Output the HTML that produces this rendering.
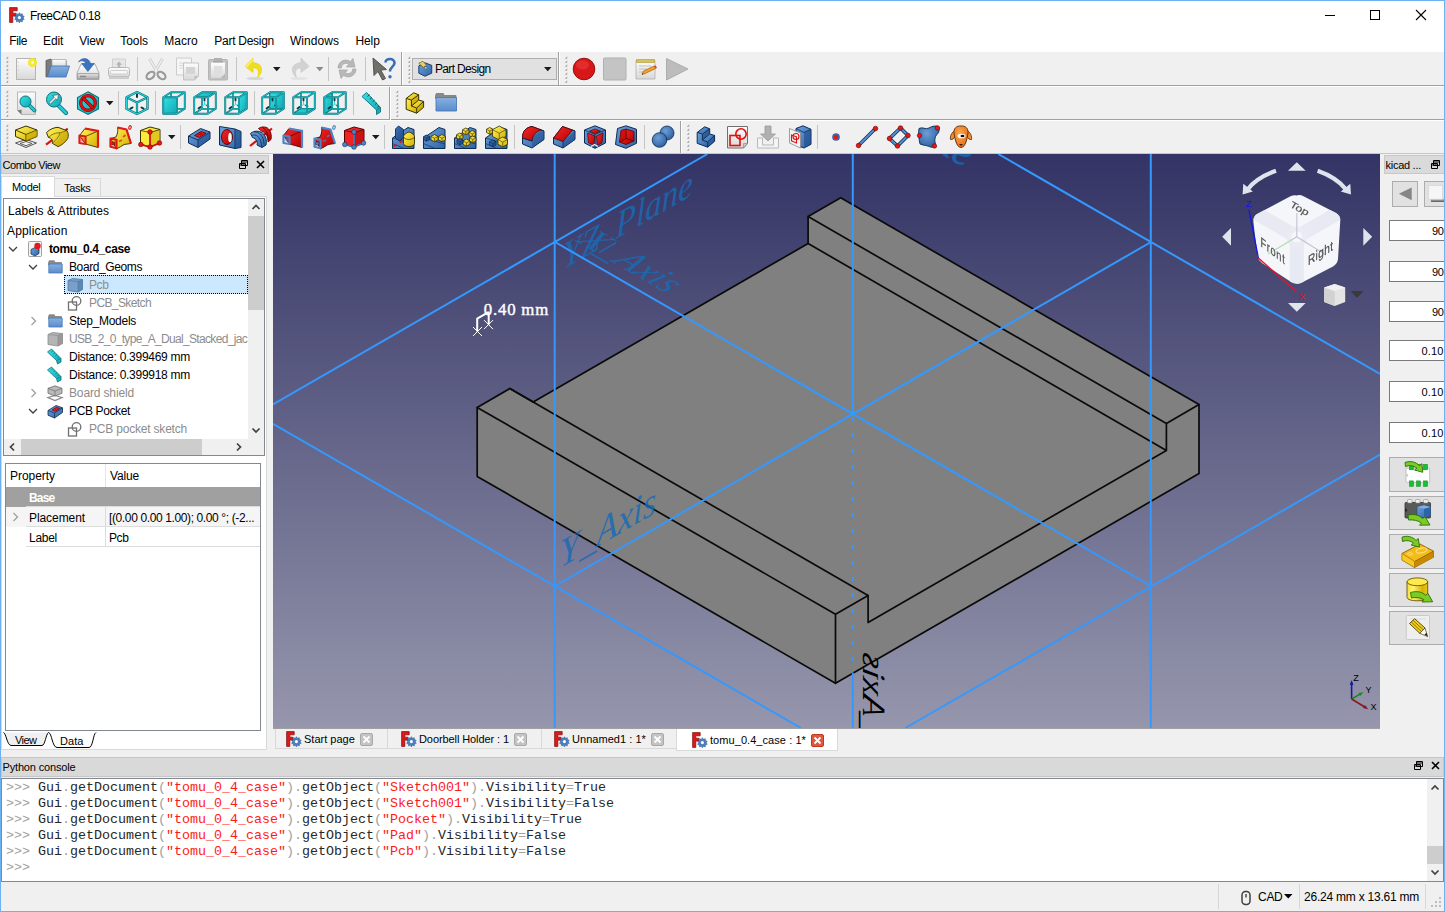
<!DOCTYPE html>
<html lang="en"><head><meta charset="utf-8"><title>FreeCAD 0.18</title>
<style>
html,body{margin:0;padding:0}
body{width:1445px;height:912px;overflow:hidden;background:#f0f0f0;font-family:"Liberation Sans",sans-serif;font-size:12px;position:relative}
.a{position:absolute;display:block}
.t{position:absolute;white-space:pre;display:block}
</style></head>
<body>
<svg class="a" width="0" height="0" style="left:0;top:0"><defs>
<linearGradient id="gY" x1="0" y1="0" x2="1" y2="1"><stop offset="0" stop-color="#fff35a"/><stop offset="1" stop-color="#d4b000"/></linearGradient>
<linearGradient id="gYd" x1="0" y1="0" x2="1" y2="1"><stop offset="0" stop-color="#e8cc18"/><stop offset="1" stop-color="#b89400"/></linearGradient>
<linearGradient id="gB" x1="0" y1="0" x2="1" y2="1"><stop offset="0" stop-color="#6da2dc"/><stop offset="1" stop-color="#2f63a6"/></linearGradient>
<linearGradient id="gBd" x1="0" y1="0" x2="1" y2="1"><stop offset="0" stop-color="#3d74b8"/><stop offset="1" stop-color="#1d4786"/></linearGradient>
<linearGradient id="gR" x1="0" y1="0" x2="1" y2="1"><stop offset="0" stop-color="#f42a2a"/><stop offset="1" stop-color="#b40000"/></linearGradient>
<linearGradient id="gT" x1="0" y1="0" x2="1" y2="1"><stop offset="0" stop-color="#36e0e6"/><stop offset="1" stop-color="#10a8b2"/></linearGradient>
<linearGradient id="gG" x1="0" y1="0" x2="0" y2="1"><stop offset="0" stop-color="#fdfdfd"/><stop offset="1" stop-color="#d8d8d8"/></linearGradient>
<linearGradient id="gG2" x1="0" y1="0" x2="0" y2="1"><stop offset="0" stop-color="#e4e4e4"/><stop offset="1" stop-color="#a8a8a8"/></linearGradient>
<linearGradient id="gFo" x1="0" y1="0" x2="0" y2="1"><stop offset="0" stop-color="#86b0e0"/><stop offset="1" stop-color="#5a8ccc"/></linearGradient>
<linearGradient id="gCy" x1="0" y1="0" x2="1" y2="0"><stop offset="0" stop-color="#f8e030"/><stop offset=".3" stop-color="#fff27a"/><stop offset=".75" stop-color="#d8b000"/><stop offset="1" stop-color="#e8c818"/></linearGradient>
<radialGradient id="gGlow"><stop offset="0" stop-color="#fff"/><stop offset=".35" stop-color="#f6ee3a"/><stop offset=".8" stop-color="#efe420" stop-opacity=".9"/><stop offset="1" stop-color="#efe420" stop-opacity="0"/></radialGradient>
<radialGradient id="gSph" cx=".4" cy=".35" r=".7"><stop offset="0" stop-color="#6c9fd8"/><stop offset="1" stop-color="#2c5e9e"/></radialGradient>
<radialGradient id="gOr" cx=".4" cy=".35" r=".7"><stop offset="0" stop-color="#ffa64d"/><stop offset="1" stop-color="#e0701a"/></radialGradient>
</defs></svg>
<div class="a" style="left:0px;top:0px;width:1445px;height:912px;border:1px solid #6fb1f0;box-sizing:border-box;z-index:50;pointer-events:none;"></div>
<div class="a" style="left:1px;top:1px;width:1443px;height:51px;background:#fff;"></div>
<svg class="a" style="left:9px;top:7px" width="16" height="16" viewBox="0 0 16 16"><path d="M.6.6h7.600v3.200H3.800v2.400h3v2.800h-3V15.400H.6z" fill="#e01818" stroke="#7a0c0c" stroke-width=".7"/><g transform="translate(10.4 10.6) scale(.92)"><path d="M0-5.4l1.2 1.7 2-.6.1 2.1 2 .7-1.2 1.7 1.2 1.7-2 .7-.1 2.1-2-.6L0 5.8l-1.2-1.7-2 .6-.1-2.1-2-.7 1.2-1.7-1.2-1.7 2-.7.1-2.1 2 .6z" fill="#4a7ebc" stroke="#2c5a94" stroke-width=".5"/><circle r="1.7" fill="#fff"/></g></svg>
<span class="t" style="left:30px;top:8.04px;font-size:12px;line-height:16px;color:#000;letter-spacing:-0.557px;">FreeCAD 0.18</span>
<svg class="a" style="left:1320px;top:5px;" width="112" height="20" viewBox="0 0 112 20"><path d="M5 10.5h10" stroke="#000" stroke-width="1" fill="none"/><rect x="50.5" y="5.5" width="9" height="9" fill="none" stroke="#000" stroke-width="1"/><path d="M96 5l10 10M106 5l-10 10" stroke="#000" stroke-width="1.1" fill="none"/></svg>
<span class="t" style="left:9.2px;top:32.64px;font-size:12px;line-height:16px;color:#000;letter-spacing:-0.336px;">File</span>
<span class="t" style="left:43px;top:32.64px;font-size:12px;line-height:16px;color:#000;letter-spacing:-0.093px;">Edit</span>
<span class="t" style="left:79.2px;top:32.64px;font-size:12px;line-height:16px;color:#000;letter-spacing:-0.199px;">View</span>
<span class="t" style="left:120.3px;top:32.64px;font-size:12px;line-height:16px;color:#000;letter-spacing:-0.063px;">Tools</span>
<span class="t" style="left:164.2px;top:32.64px;font-size:12px;line-height:16px;color:#000;letter-spacing:0.051px;">Macro</span>
<span class="t" style="left:214.3px;top:32.64px;font-size:12px;line-height:16px;color:#000;letter-spacing:-0.272px;">Part Design</span>
<span class="t" style="left:290px;top:32.64px;font-size:12px;line-height:16px;color:#000;letter-spacing:0.045px;">Windows</span>
<span class="t" style="left:355.5px;top:32.64px;font-size:12px;line-height:16px;color:#000;letter-spacing:-0.122px;">Help</span>
<div class="a" style="left:1px;top:52px;width:1443px;height:102px;background:#f0f0f0;"></div>
<div class="a" style="left:1px;top:85px;width:1443px;height:1px;background:#a0a0a0;"></div>
<div class="a" style="left:1px;top:86px;width:1443px;height:1px;background:#fff;"></div>
<div class="a" style="left:1px;top:119px;width:1443px;height:1px;background:#a0a0a0;"></div>
<div class="a" style="left:1px;top:120px;width:1443px;height:1px;background:#fff;"></div>
<svg class="a" style="left:5px;top:56px;" width="4" height="29" viewBox="0 0 4 29"><path d="M3.200 0.3v2.400h-2.400z" fill="#a2a2a2"/><path d="M3.200 4.3v2.400h-2.400z" fill="#a2a2a2"/><path d="M3.200 8.3v2.400h-2.400z" fill="#a2a2a2"/><path d="M3.200 12.3v2.400h-2.400z" fill="#a2a2a2"/><path d="M3.200 16.3v2.400h-2.400z" fill="#a2a2a2"/><path d="M3.200 20.3v2.400h-2.400z" fill="#a2a2a2"/><path d="M3.200 24.3v2.400h-2.400z" fill="#a2a2a2"/></svg>
<svg class="a" style="left:5px;top:90px;" width="4" height="29" viewBox="0 0 4 29"><path d="M3.200 0.3v2.400h-2.400z" fill="#a2a2a2"/><path d="M3.200 4.3v2.400h-2.400z" fill="#a2a2a2"/><path d="M3.200 8.3v2.400h-2.400z" fill="#a2a2a2"/><path d="M3.200 12.3v2.400h-2.400z" fill="#a2a2a2"/><path d="M3.200 16.3v2.400h-2.400z" fill="#a2a2a2"/><path d="M3.200 20.3v2.400h-2.400z" fill="#a2a2a2"/><path d="M3.200 24.3v2.400h-2.400z" fill="#a2a2a2"/></svg>
<svg class="a" style="left:5px;top:124px;" width="4" height="29" viewBox="0 0 4 29"><path d="M3.200 0.3v2.400h-2.400z" fill="#a2a2a2"/><path d="M3.200 4.3v2.400h-2.400z" fill="#a2a2a2"/><path d="M3.200 8.3v2.400h-2.400z" fill="#a2a2a2"/><path d="M3.200 12.3v2.400h-2.400z" fill="#a2a2a2"/><path d="M3.200 16.3v2.400h-2.400z" fill="#a2a2a2"/><path d="M3.200 20.3v2.400h-2.400z" fill="#a2a2a2"/><path d="M3.200 24.3v2.400h-2.400z" fill="#a2a2a2"/></svg>
<div class="a" style="left:401px;top:52px;width:1px;height:33px;background:#a0a0a0;"></div>
<div class="a" style="left:402px;top:52px;width:1px;height:33px;background:#fff;"></div>
<svg class="a" style="left:407px;top:56px;" width="4" height="29" viewBox="0 0 4 29"><path d="M3.200 0.3v2.400h-2.400z" fill="#a2a2a2"/><path d="M3.200 4.3v2.400h-2.400z" fill="#a2a2a2"/><path d="M3.200 8.3v2.400h-2.400z" fill="#a2a2a2"/><path d="M3.200 12.3v2.400h-2.400z" fill="#a2a2a2"/><path d="M3.200 16.3v2.400h-2.400z" fill="#a2a2a2"/><path d="M3.200 20.3v2.400h-2.400z" fill="#a2a2a2"/><path d="M3.200 24.3v2.400h-2.400z" fill="#a2a2a2"/></svg>
<div class="a" style="left:389px;top:87px;width:1px;height:33px;background:#a0a0a0;"></div>
<div class="a" style="left:390px;top:87px;width:1px;height:33px;background:#fff;"></div>
<svg class="a" style="left:395px;top:90px;" width="4" height="29" viewBox="0 0 4 29"><path d="M3.200 0.3v2.400h-2.400z" fill="#a2a2a2"/><path d="M3.200 4.3v2.400h-2.400z" fill="#a2a2a2"/><path d="M3.200 8.3v2.400h-2.400z" fill="#a2a2a2"/><path d="M3.200 12.3v2.400h-2.400z" fill="#a2a2a2"/><path d="M3.200 16.3v2.400h-2.400z" fill="#a2a2a2"/><path d="M3.200 20.3v2.400h-2.400z" fill="#a2a2a2"/><path d="M3.200 24.3v2.400h-2.400z" fill="#a2a2a2"/></svg>
<div class="a" style="left:680px;top:121px;width:1px;height:33px;background:#a0a0a0;"></div>
<div class="a" style="left:681px;top:121px;width:1px;height:33px;background:#fff;"></div>
<svg class="a" style="left:686px;top:124px;" width="4" height="29" viewBox="0 0 4 29"><path d="M3.200 0.3v2.400h-2.400z" fill="#a2a2a2"/><path d="M3.200 4.3v2.400h-2.400z" fill="#a2a2a2"/><path d="M3.200 8.3v2.400h-2.400z" fill="#a2a2a2"/><path d="M3.200 12.3v2.400h-2.400z" fill="#a2a2a2"/><path d="M3.200 16.3v2.400h-2.400z" fill="#a2a2a2"/><path d="M3.200 20.3v2.400h-2.400z" fill="#a2a2a2"/><path d="M3.200 24.3v2.400h-2.400z" fill="#a2a2a2"/></svg>
<div class="a" style="left:1px;top:155px;width:268px;height:19px;background:#dadada;border:1px solid #c8c8c8;box-sizing:border-box;"></div>
<div class="a" style="left:1px;top:153px;width:1443px;height:1px;background:#c6c6c6;"></div>
<span class="t" style="left:2.5px;top:156.79px;font-size:11px;line-height:16px;color:#000;letter-spacing:-0.467px;">Combo View</span>
<svg class="a" style="left:238px;top:159px" width="30" height="12" viewBox="0 0 30 12"><path d="M3.5 1.5h6v5h-6zM3.5 3h6M1.5 4.5h6v5h-6zM1.5 6h6" fill="#d9d9d9" stroke="#000" stroke-width="1"/><path d="M19 2l7 7M26 2l-7 7" stroke="#000" stroke-width="1.6" fill="none"/></svg>
<div class="a" style="left:1px;top:196px;width:266px;height:554px;background:#fff;border:1px solid #d9d9d9;box-sizing:border-box;"></div>
<div class="a" style="left:54px;top:178px;width:47px;height:19px;background:#f0f0f0;border:1px solid #d9d9d9;box-sizing:border-box;"></div>
<div class="a" style="left:1px;top:176px;width:54px;height:21px;background:#fff;border:1px solid #d9d9d9;box-sizing:border-box;border-bottom:none;"></div>
<span class="t" style="left:12px;top:179.19px;font-size:11px;line-height:16px;color:#000;letter-spacing:-0.294px;">Model</span>
<span class="t" style="left:64px;top:180.19px;font-size:11px;line-height:16px;color:#000;letter-spacing:-0.325px;">Tasks</span>
<div class="a" style="left:3px;top:198px;width:262px;height:258px;background:#fff;border:1px solid #828790;box-sizing:border-box;"></div>
<span class="t" style="left:8px;top:203.04px;font-size:12px;line-height:16px;color:#000;letter-spacing:0.051px;">Labels &amp; Attributes</span>
<span class="t" style="left:7px;top:223.04px;font-size:12px;line-height:16px;color:#000;letter-spacing:0.163px;">Application</span>
<div class="a" style="left:64px;top:275px;width:184px;height:19px;background:#cce8ff;outline:1px dotted #000;outline-offset:-1px;"></div>
<span class="t" style="left:49px;top:241.14px;font-size:12px;line-height:16px;color:#000;font-weight:700;letter-spacing:-0.387px;">tomu_0.4_case</span>
<svg class="a" style="left:28px;top:241px" width="16" height="16" viewBox="0 0 16 16" overflow="visible"><rect x=".5" y=".5" width="13" height="15" rx="1" fill="#f4f4f4" stroke="#8c8c8c" stroke-width=".8"/><path d="M3 8.500l4-2 4 1.500v4.500L7 15 3 13z" fill="url(#gB)" stroke="#0b2c55" stroke-width=".7"/><circle cx="9.500" cy="5" r="3.200" fill="#e41818"/></svg>
<svg class="a" style="left:8px;top:244px;" width="10" height="10" viewBox="0 0 10 10"><path d="M1 3l4 4 4-4" fill="none" stroke="#404040" stroke-width="1.3"/></svg>
<span class="t" style="left:69px;top:259.14px;font-size:12px;line-height:16px;color:#000;letter-spacing:-0.396px;">Board_Geoms</span>
<svg class="a" style="left:48px;top:259px" width="16" height="16" viewBox="0 0 16 16" overflow="visible"><path d="M.5 3.500l.7-1.800h5l.8 1.800H13.500v2.500H.5z" fill="#8a8a8a" stroke="#6e6e6e" stroke-width=".6"/><path d="M.8 5h13.400V14H.8z" fill="url(#gFo)" stroke="#4a7ab8" stroke-width=".8"/></svg>
<svg class="a" style="left:28px;top:262px;" width="10" height="10" viewBox="0 0 10 10"><path d="M1 3l4 4 4-4" fill="none" stroke="#404040" stroke-width="1.3"/></svg>
<span class="t" style="left:89px;top:277.14px;font-size:12px;line-height:16px;color:#8c8c8c;letter-spacing:-0.391px;">Pcb</span>
<svg class="a" style="left:67px;top:277px" width="16" height="16" viewBox="0 0 16 16" overflow="visible"><path d="M1 3.500L5.500 1.500 15.500 2.500V12.500L11 15 1 13.500z" fill="#7aa0c8" stroke="#4a78a8" stroke-width=".8"/><path d="M1 3.500L11 4.500V15M11 4.500L15.500 2.500" fill="none" stroke="#4a78a8" stroke-width=".7"/><path d="M11 4.500L15.500 2.500V12.500L11 15z" fill="#4a78a8" opacity=".6"/></svg>
<span class="t" style="left:89px;top:295.14px;font-size:12px;line-height:16px;color:#8c8c8c;letter-spacing:-0.602px;">PCB_Sketch</span>
<svg class="a" style="left:67px;top:295px" width="16" height="16" viewBox="0 0 16 16" overflow="visible"><rect x="1.500" y="7" width="8" height="8" fill="none" stroke="#707070" stroke-width="1.300"/><circle cx="9.500" cy="6" r="4.300" fill="none" stroke="#707070" stroke-width="1.300"/></svg>
<span class="t" style="left:69px;top:313.14px;font-size:12px;line-height:16px;color:#000;letter-spacing:-0.276px;">Step_Models</span>
<svg class="a" style="left:48px;top:313px" width="16" height="16" viewBox="0 0 16 16" overflow="visible"><path d="M.5 3.500l.7-1.800h5l.8 1.800H13.500v2.500H.5z" fill="#8a8a8a" stroke="#6e6e6e" stroke-width=".6"/><path d="M.8 5h13.400V14H.8z" fill="url(#gFo)" stroke="#4a7ab8" stroke-width=".8"/></svg>
<svg class="a" style="left:28px;top:316px;" width="10" height="10" viewBox="0 0 10 10"><path d="M3.5 1l4 4-4 4" fill="none" stroke="#a0a0a0" stroke-width="1.3"/></svg>
<span class="t" style="left:69px;top:331.14px;font-size:12px;line-height:16px;color:#8c8c8c;letter-spacing:-0.670px;">USB_2_0_type_A_Dual_Stacked_jac</span>
<svg class="a" style="left:47px;top:331px" width="16" height="16" viewBox="0 0 16 16" overflow="visible"><path d="M1 3.500L5.500 1.500 15.500 2.500V12.500L11 15 1 13.500z" fill="#b4b4b4" stroke="#8c8c8c" stroke-width=".8"/><path d="M1 3.500L11 4.500V15M11 4.500L15.500 2.500" fill="none" stroke="#8c8c8c" stroke-width=".7"/><path d="M11 4.500L15.500 2.500V12.500L11 15z" fill="#888" opacity=".6"/></svg>
<span class="t" style="left:69px;top:349.14px;font-size:12px;line-height:16px;color:#000;letter-spacing:-0.272px;">Distance: 0.399469 mm</span>
<svg class="a" style="left:47px;top:349px" width="16" height="16" viewBox="0 0 16 16" overflow="visible"><path d="M.5 3L4.500 0 14 9.500V13L10.500 15 9.500 11.500z" fill="url(#gT)" stroke="#0a727a" stroke-width=".8" stroke-linejoin="round"/><path d="M9.500 11.500L14 9.500" stroke="#0a727a" stroke-width=".6"/><path d="M4.500 2.800l1.300-1M6.500 4.800l1.300-1M8.500 6.800l1.300-1M10.500 8.800l1.300-1" stroke="#0a5a62" stroke-width=".8"/></svg>
<span class="t" style="left:69px;top:367.14px;font-size:12px;line-height:16px;color:#000;letter-spacing:-0.272px;">Distance: 0.399918 mm</span>
<svg class="a" style="left:47px;top:367px" width="16" height="16" viewBox="0 0 16 16" overflow="visible"><path d="M.5 3L4.500 0 14 9.500V13L10.500 15 9.500 11.500z" fill="url(#gT)" stroke="#0a727a" stroke-width=".8" stroke-linejoin="round"/><path d="M9.500 11.500L14 9.500" stroke="#0a727a" stroke-width=".6"/><path d="M4.500 2.800l1.300-1M6.500 4.800l1.300-1M8.500 6.800l1.300-1M10.500 8.800l1.300-1" stroke="#0a5a62" stroke-width=".8"/></svg>
<span class="t" style="left:69px;top:385.14px;font-size:12px;line-height:16px;color:#8c8c8c;letter-spacing:-0.142px;">Board shield</span>
<svg class="a" style="left:47px;top:385px" width="16" height="16" viewBox="0 0 16 16" overflow="visible"><path d="M8 10.500l7 2-7 3-7-3z" fill="none" stroke="#8a8a8a" stroke-width="1.300"/><path d="M8 .8l7 2.500v5L8 11 1 8.300v-5z" fill="#b8b8b8" stroke="#6e6e6e" stroke-width=".8"/><path d="M1 3.300L8 6l7-2.700M8 6v5" fill="none" stroke="#6e6e6e" stroke-width=".7"/></svg>
<svg class="a" style="left:28px;top:388px;" width="10" height="10" viewBox="0 0 10 10"><path d="M3.5 1l4 4-4 4" fill="none" stroke="#a0a0a0" stroke-width="1.3"/></svg>
<span class="t" style="left:69px;top:403.14px;font-size:12px;line-height:16px;color:#000;letter-spacing:-0.367px;">PCB Pocket</span>
<svg class="a" style="left:47px;top:403px" width="16" height="16" viewBox="0 0 16 16" overflow="visible"><path d="M1 7.500L9 2.500l6.500 2.300v4.700L7.500 15 1 12.200z" fill="url(#gB)" stroke="#0b2c55" stroke-width=".8"/><path d="M1 7.500L7.500 10l8-5.200M7.500 10v5" fill="none" stroke="#0b2c55" stroke-width=".7"/><path d="M5 7L9.500 4.300l3.300 1.200-4.300 2.800z" fill="#e41818" stroke="#6a0000" stroke-width=".6"/></svg>
<svg class="a" style="left:28px;top:406px;" width="10" height="10" viewBox="0 0 10 10"><path d="M1 3l4 4 4-4" fill="none" stroke="#404040" stroke-width="1.3"/></svg>
<span class="t" style="left:89px;top:421.14px;font-size:12px;line-height:16px;color:#8c8c8c;letter-spacing:-0.197px;">PCB pocket sketch</span>
<svg class="a" style="left:67px;top:421px" width="16" height="16" viewBox="0 0 16 16" overflow="visible"><rect x="1.500" y="7" width="8" height="8" fill="none" stroke="#707070" stroke-width="1.300"/><circle cx="9.500" cy="6" r="4.300" fill="none" stroke="#707070" stroke-width="1.300"/></svg>
<div class="a" style="left:248px;top:199px;width:16px;height:240px;background:#f0f0f0;"></div>
<div class="a" style="left:248px;top:216px;width:16px;height:94px;background:#cdcdcd;"></div>
<svg class="a" style="left:248px;top:199px;" width="16" height="17" viewBox="0 0 16 17"><path d="M4.5 10l3.5-3.5 3.5 3.5" fill="none" stroke="#404040" stroke-width="1.7"/></svg>
<svg class="a" style="left:248px;top:422px;" width="16" height="17" viewBox="0 0 16 17"><path d="M4.5 6.5l3.5 3.5 3.5-3.5" fill="none" stroke="#404040" stroke-width="1.7"/></svg>
<div class="a" style="left:4px;top:439px;width:260px;height:16px;background:#f0f0f0;"></div>
<div class="a" style="left:21px;top:439px;width:181px;height:16px;background:#cdcdcd;"></div>
<svg class="a" style="left:4px;top:439px;" width="17" height="16" viewBox="0 0 17 16"><path d="M10 4.5l-3.5 3.5 3.5 3.5" fill="none" stroke="#404040" stroke-width="1.7"/></svg>
<svg class="a" style="left:230px;top:439px;" width="17" height="16" viewBox="0 0 17 16"><path d="M7 4.5l3.5 3.5-3.5 3.5" fill="none" stroke="#404040" stroke-width="1.7"/></svg>
<div class="a" style="left:5px;top:463px;width:256px;height:268px;background:#fff;border:1px solid #828790;box-sizing:border-box;"></div>
<span class="t" style="left:10px;top:468.04px;font-size:12px;line-height:16px;color:#000;letter-spacing:-0.043px;">Property</span>
<span class="t" style="left:110px;top:468.04px;font-size:12px;line-height:16px;color:#000;letter-spacing:-0.159px;">Value</span>
<div class="a" style="left:105px;top:464px;width:1px;height:23px;background:#e5e5e5;"></div>
<div class="a" style="left:6px;top:487px;width:254px;height:20px;background:#a0a0a0;"></div>
<span class="t" style="left:29px;top:490.34px;font-size:12px;line-height:16px;color:#fff;font-weight:700;letter-spacing:-0.797px;">Base</span>
<div class="a" style="left:6px;top:507px;width:254px;height:20px;background:#f5f5f5;"></div>
<div class="a" style="left:26px;top:506px;width:234px;height:1px;background:#dcdcdc;"></div>
<div class="a" style="left:26px;top:526px;width:234px;height:1px;background:#dcdcdc;"></div>
<div class="a" style="left:26px;top:546px;width:234px;height:1px;background:#dcdcdc;"></div>
<div class="a" style="left:105px;top:507px;width:1px;height:40px;background:#dcdcdc;"></div>
<svg class="a" style="left:10px;top:512px;" width="10" height="10" viewBox="0 0 10 10"><path d="M3.5 1l4 4-4 4" fill="none" stroke="#a0a0a0" stroke-width="1.3"/></svg>
<span class="t" style="left:29px;top:510.14px;font-size:12px;line-height:16px;color:#000;letter-spacing:-0.076px;">Placement</span>
<span class="t" style="left:109px;top:510.14px;font-size:12px;line-height:16px;color:#000;letter-spacing:-0.377px;">[(0.00 0.00 1.00); 0.00 °; (-2...</span>
<span class="t" style="left:29px;top:530.14px;font-size:12px;line-height:16px;color:#000;letter-spacing:-0.272px;">Label</span>
<span class="t" style="left:109px;top:530.14px;font-size:12px;line-height:16px;color:#000;letter-spacing:-0.391px;">Pcb</span>
<svg class="a" style="left:2px;top:731px;" width="100" height="18" viewBox="0 0 100 18"><path d="M1.5 1.5 C4 2 5 14 9 14.5 H40 C43 14.5 44 3 46.5 1.5" fill="#f0f0f0" stroke="#000" stroke-width="1"/><path d="M46.5 1.5 C50 2 50 16 55 16.5 H87 C91 16.5 91 3 94 1.5" fill="#fff" stroke="#000" stroke-width="1"/></svg>
<span class="t" style="left:15px;top:732.19px;font-size:11px;line-height:16px;color:#000;letter-spacing:-0.535px;">View</span>
<span class="t" style="left:60px;top:733.19px;font-size:11px;line-height:16px;color:#000;letter-spacing:0.062px;">Data</span>
<div class="a" style="left:1384px;top:155px;width:61px;height:19px;background:#dadada;border:1px solid #c8c8c8;box-sizing:border-box;"></div>
<span class="t" style="left:1385.5px;top:156.79px;font-size:11px;line-height:16px;color:#000;letter-spacing:-0.271px;">kicad ...</span>
<svg class="a" style="left:1430px;top:159px" width="30" height="12" viewBox="0 0 30 12"><path d="M3.5 1.5h6v5h-6zM3.5 3h6M1.5 4.5h6v5h-6zM1.5 6h6" fill="#d9d9d9" stroke="#000" stroke-width="1"/></svg>
<div class="a" style="left:1392px;top:181px;width:26px;height:26px;background:#e1e1e1;border:1px solid #adadad;box-sizing:border-box;"></div>
<svg class="a" style="left:1396px;top:185px;" width="18" height="18" viewBox="0 0 18 18"><path d="M15.700 2.400v12.800L2.900 8.800z" fill="#858585"/></svg>
<div class="a" style="left:1424px;top:181px;width:26px;height:26px;background:#e1e1e1;border:1px solid #adadad;box-sizing:border-box;"></div>
<svg class="a" style="left:1428px;top:185px;" width="18" height="18" viewBox="0 0 18 18"><path d="M3 14h14v3H3z" fill="#6a6a6a"/><path d="M2.500 14.200h14v1.300h-14z" fill="#b0b0b0"/><rect x=".5" y=".6" width="14" height="13.600" fill="#f6f6f4" stroke="#d8d8d8" stroke-width=".8"/></svg>
<div class="a" style="left:1389px;top:220px;width:60px;height:21px;background:#fff;border:1px solid #7a7a7a;box-sizing:border-box;"></div>
<span class="t" style="left:1432.0px;top:223.19px;font-size:11px;line-height:16px;color:#000;letter-spacing:-0.375px;">90</span>
<div class="a" style="left:1389px;top:261px;width:60px;height:21px;background:#fff;border:1px solid #7a7a7a;box-sizing:border-box;"></div>
<span class="t" style="left:1432.0px;top:264.19px;font-size:11px;line-height:16px;color:#000;letter-spacing:-0.375px;">90</span>
<div class="a" style="left:1389px;top:301px;width:60px;height:21px;background:#fff;border:1px solid #7a7a7a;box-sizing:border-box;"></div>
<span class="t" style="left:1432.0px;top:304.19px;font-size:11px;line-height:16px;color:#000;letter-spacing:-0.375px;">90</span>
<div class="a" style="left:1389px;top:340px;width:60px;height:21px;background:#fff;border:1px solid #7a7a7a;box-sizing:border-box;"></div>
<span class="t" style="left:1421.5px;top:343.19px;font-size:11px;line-height:16px;color:#000;letter-spacing:0.141px;">0.10</span>
<div class="a" style="left:1389px;top:381px;width:60px;height:21px;background:#fff;border:1px solid #7a7a7a;box-sizing:border-box;"></div>
<span class="t" style="left:1421.5px;top:384.19px;font-size:11px;line-height:16px;color:#000;letter-spacing:0.141px;">0.10</span>
<div class="a" style="left:1389px;top:422px;width:60px;height:21px;background:#fff;border:1px solid #7a7a7a;box-sizing:border-box;"></div>
<span class="t" style="left:1421.5px;top:425.19px;font-size:11px;line-height:16px;color:#000;letter-spacing:0.141px;">0.10</span>
<div class="a" style="left:1389px;top:457px;width:60px;height:35px;background:#e1e1e1;border:1px solid #adadad;box-sizing:border-box;"></div>
<svg class="a" style="left:1389px;top:457px" width="56" height="36" viewBox="0 0 56 36"><rect x="17" y="11.200" width="23.700" height="14.200" rx="1.200" fill="#fff" stroke="#b4b4b4" stroke-width=".8"/><path d="M17.300 16.500a1.800 1.800 0 0 1 0 3.600z" fill="#c8c8c8"/><rect x="20.5" y="7.3" width="4" height="5.500" fill="#16c030" stroke="#0a8a1e" stroke-width=".5"/><rect x="20.5" y="23.9" width="4" height="5.500" fill="#16c030" stroke="#0a8a1e" stroke-width=".5"/><rect x="27.5" y="7.3" width="4" height="5.500" fill="#16c030" stroke="#0a8a1e" stroke-width=".5"/><rect x="27.5" y="23.9" width="4" height="5.500" fill="#16c030" stroke="#0a8a1e" stroke-width=".5"/><rect x="34.5" y="7.3" width="4" height="5.500" fill="#16c030" stroke="#0a8a1e" stroke-width=".5"/><rect x="34.5" y="23.9" width="4" height="5.500" fill="#16c030" stroke="#0a8a1e" stroke-width=".5"/><path d="M16 5.500c5.500-2 11-.5 14.500 3.200l2.400-2 .9 8.600-8.300-2.300 2.300-1.800C24.500 8.500 20.500 8 16.500 9.600z" fill="#7acc22" stroke="#2a6e0a" stroke-width=".9" stroke-linejoin="round"/></svg>
<div class="a" style="left:1389px;top:496px;width:60px;height:34px;background:#e1e1e1;border:1px solid #adadad;box-sizing:border-box;"></div>
<svg class="a" style="left:1389px;top:496px" width="56" height="36" viewBox="0 0 56 36"><rect x="16" y="6.500" width="25.500" height="15.500" rx="1" fill="#5a5a5a" stroke="#2e2e2e" stroke-width=".8"/><path d="M16.300 12.500a1.800 1.800 0 0 1 0 3.600z" fill="#222"/><rect x="18.5" y="3.500" width="4.600" height="3.500" rx=".8" fill="#f0f0f0" stroke="#8a8a8a" stroke-width=".6"/><rect x="26.5" y="3.500" width="4.600" height="3.500" rx=".8" fill="#f0f0f0" stroke="#8a8a8a" stroke-width=".6"/><rect x="34.5" y="3.500" width="4.600" height="3.500" rx=".8" fill="#f0f0f0" stroke="#8a8a8a" stroke-width=".6"/><path d="M28 11l7-1.700 6.500 1.700v8.500l-6.500 2.300-7-2z" fill="url(#gB)" stroke="#1d4786" stroke-width=".5"/><path d="M35 12.800l6.500-1.800v8.500l-6.500 2.300z" fill="#2f63a6"/><path d="M28 11l7-1.700 6.500 1.700-6.500 1.800z" fill="#7fb0e4"/><path d="M19 19.200c5-1.500 11-.5 14.500 3.300l2.500-1.800 5 8.300-10.500.2 2-2.200C29 24.500 24.500 23.500 19.500 24z" fill="#7acc22" stroke="#2a6e0a" stroke-width=".9" stroke-linejoin="round"/></svg>
<div class="a" style="left:1389px;top:534px;width:60px;height:35px;background:#e1e1e1;border:1px solid #adadad;box-sizing:border-box;"></div>
<svg class="a" style="left:1389px;top:534px" width="56" height="36" viewBox="0 0 56 36"><path d="M13 19.500L31 10l13.500 7.200v6L25.500 33.500 13 26z" fill="#f4bc18" stroke="#8a5a00" stroke-width=".9" stroke-linejoin="round"/><path d="M25.500 27.500v6L44.500 23.200v-6z" fill="#c88a00"/><path d="M13 19.500L25.500 27.500 44.500 17.200M25.500 27.500v6" fill="none" stroke="#8a5a00" stroke-width=".8"/><path d="M13 19.500v6.500l12.500 7.500v-6z" fill="#ffd42a" opacity=".55"/><ellipse cx="32.500" cy="16.500" rx="5.500" ry="2.300" fill="none" stroke="#ffe680" stroke-width="1" transform="rotate(-12 32.500 16.500)"/><ellipse cx="21" cy="20" rx="2.500" ry="1.200" fill="none" stroke="#ffe680" stroke-width=".8"/><path d="M13 3.200c5-2 10.500-.5 14 3.200l2.300-1.800 1.200 8.400-8.300-2 2.200-1.900C21.500 6.500 17.500 6 13.500 7.500z" fill="#7acc22" stroke="#2a6e0a" stroke-width=".9" stroke-linejoin="round"/></svg>
<div class="a" style="left:1389px;top:573px;width:60px;height:34px;background:#e1e1e1;border:1px solid #adadad;box-sizing:border-box;"></div>
<svg class="a" style="left:1389px;top:573px" width="56" height="36" viewBox="0 0 56 36"><path d="M18 8.800v15.500c0 4.700 20.700 4.700 20.700 0V8.800z" fill="url(#gCy)" stroke="#6a5400" stroke-width=".9"/><ellipse cx="28.350" cy="8.800" rx="10.350" ry="3.900" fill="#ffea4a" stroke="#6a5400" stroke-width=".9"/><path d="M21.500 19.500c6-1.800 11.500-.8 15 2.800l2.400-2 4.800 8.500-10.800.2 2-2.300C31.500 24.500 27 24 22.500 25z" fill="#7acc22" stroke="#2a6e0a" stroke-width=".9" stroke-linejoin="round"/></svg>
<div class="a" style="left:1389px;top:611px;width:60px;height:34px;background:#e1e1e1;border:1px solid #adadad;box-sizing:border-box;"></div>
<svg class="a" style="left:1389px;top:611px" width="56" height="36" viewBox="0 0 56 36"><rect x="17.300" y="4.500" width="23.200" height="24" rx="1" fill="#efefef" stroke="#c6c6c6" stroke-width=".9"/><path d="M21 8h16" stroke="#d8d8d8" stroke-width="1"/><path d="M20.500 12.500l5.200-4.800 10.300 9.300-5.200 5.300z" fill="#f2d21e" stroke="#4a3a00" stroke-width=".9" stroke-linejoin="round"/><path d="M22.200 10.900l10.300 9.600M23.900 9.300l10.400 9.500" stroke="#8a6c00" stroke-width="1"/><path d="M30.800 22.300l5.200-5.300 2.600 8.600z" fill="#fafafa" stroke="#4a3a00" stroke-width=".7" stroke-linejoin="round"/><path d="M35.500 23.400l2-1.600 1.100 3.800z" fill="#2a2000"/></svg>
<div class="a" style="left:275px;top:729px;width:113px;height:20px;background:#f0f0f0;border:1px solid #d9d9d9;box-sizing:border-box;border-top:none;"></div>
<svg class="a" style="left:286px;top:731px" width="16" height="16" viewBox="0 0 16 16"><path d="M.6.6h7.600v3.200H3.800v2.400h3v2.800h-3V15.400H.6z" fill="#e01818" stroke="#7a0c0c" stroke-width=".7"/><g transform="translate(10.4 10.6) scale(.92)"><path d="M0-5.4l1.2 1.7 2-.6.1 2.1 2 .7-1.2 1.7 1.2 1.7-2 .7-.1 2.1-2-.6L0 5.8l-1.2-1.7-2 .6-.1-2.1-2-.7 1.2-1.7-1.2-1.7 2-.7.1-2.1 2 .6z" fill="#4a7ebc" stroke="#2c5a94" stroke-width=".5"/><circle r="1.7" fill="#fff"/></g></svg>
<span class="t" style="left:304px;top:731.39px;font-size:11px;line-height:16px;color:#000;">Start page</span>
<svg class="a" style="left:360px;top:733px;" width="13" height="13" viewBox="0 0 13 13"><rect x=".5" y=".5" width="12" height="12" rx="1.5" fill="#c4c4c4" stroke="#a8a8a8"/><path d="M3.5 3.5l6 6M9.5 3.5l-6 6" stroke="#fff" stroke-width="1.8"/></svg>
<div class="a" style="left:387px;top:729px;width:155px;height:20px;background:#f0f0f0;border:1px solid #d9d9d9;box-sizing:border-box;border-top:none;"></div>
<svg class="a" style="left:401px;top:731px" width="16" height="16" viewBox="0 0 16 16"><path d="M.6.6h7.600v3.200H3.800v2.400h3v2.800h-3V15.400H.6z" fill="#e01818" stroke="#7a0c0c" stroke-width=".7"/><g transform="translate(10.4 10.6) scale(.92)"><path d="M0-5.4l1.2 1.7 2-.6.1 2.1 2 .7-1.2 1.7 1.2 1.7-2 .7-.1 2.1-2-.6L0 5.8l-1.2-1.7-2 .6-.1-2.1-2-.7 1.2-1.7-1.2-1.7 2-.7.1-2.1 2 .6z" fill="#4a7ebc" stroke="#2c5a94" stroke-width=".5"/><circle r="1.7" fill="#fff"/></g></svg>
<span class="t" style="left:419px;top:731.39px;font-size:11px;line-height:16px;color:#000;letter-spacing:-0.092px;">Doorbell Holder : 1</span>
<svg class="a" style="left:514px;top:733px;" width="13" height="13" viewBox="0 0 13 13"><rect x=".5" y=".5" width="12" height="12" rx="1.5" fill="#c4c4c4" stroke="#a8a8a8"/><path d="M3.5 3.5l6 6M9.5 3.5l-6 6" stroke="#fff" stroke-width="1.8"/></svg>
<div class="a" style="left:541px;top:729px;width:136px;height:20px;background:#f0f0f0;border:1px solid #d9d9d9;box-sizing:border-box;border-top:none;"></div>
<svg class="a" style="left:554px;top:731px" width="16" height="16" viewBox="0 0 16 16"><path d="M.6.6h7.600v3.200H3.800v2.400h3v2.800h-3V15.400H.6z" fill="#e01818" stroke="#7a0c0c" stroke-width=".7"/><g transform="translate(10.4 10.6) scale(.92)"><path d="M0-5.4l1.2 1.7 2-.6.1 2.1 2 .7-1.2 1.7 1.2 1.7-2 .7-.1 2.1-2-.6L0 5.8l-1.2-1.7-2 .6-.1-2.1-2-.7 1.2-1.7-1.2-1.7 2-.7.1-2.1 2 .6z" fill="#4a7ebc" stroke="#2c5a94" stroke-width=".5"/><circle r="1.7" fill="#fff"/></g></svg>
<span class="t" style="left:572px;top:731.39px;font-size:11px;line-height:16px;color:#000;letter-spacing:0.043px;">Unnamed1 : 1*</span>
<svg class="a" style="left:651px;top:733px;" width="13" height="13" viewBox="0 0 13 13"><rect x=".5" y=".5" width="12" height="12" rx="1.5" fill="#c4c4c4" stroke="#a8a8a8"/><path d="M3.5 3.5l6 6M9.5 3.5l-6 6" stroke="#fff" stroke-width="1.8"/></svg>
<div class="a" style="left:676px;top:729px;width:162px;height:22px;background:#fff;border:1px solid #d9d9d9;box-sizing:border-box;border-top:none;"></div>
<svg class="a" style="left:692px;top:732px" width="16" height="16" viewBox="0 0 16 16"><path d="M.6.6h7.600v3.200H3.800v2.400h3v2.800h-3V15.400H.6z" fill="#e01818" stroke="#7a0c0c" stroke-width=".7"/><g transform="translate(10.4 10.6) scale(.92)"><path d="M0-5.4l1.2 1.7 2-.6.1 2.1 2 .7-1.2 1.7 1.2 1.7-2 .7-.1 2.1-2-.6L0 5.8l-1.2-1.7-2 .6-.1-2.1-2-.7 1.2-1.7-1.2-1.7 2-.7.1-2.1 2 .6z" fill="#4a7ebc" stroke="#2c5a94" stroke-width=".5"/><circle r="1.7" fill="#fff"/></g></svg>
<span class="t" style="left:710px;top:732.39px;font-size:11px;line-height:16px;color:#000;letter-spacing:0.062px;">tomu_0.4_case : 1*</span>
<svg class="a" style="left:811px;top:734px;" width="13" height="13" viewBox="0 0 13 13"><rect x=".5" y=".5" width="12" height="12" rx="1.5" fill="#e2583a" stroke="#c03a22"/><path d="M3.5 3.5l6 6M9.5 3.5l-6 6" stroke="#fff" stroke-width="1.8"/></svg>
<div class="a" style="left:1px;top:757px;width:1443px;height:20px;background:#d9d9d9;border:1px solid #c6c6c6;box-sizing:border-box;"></div>
<span class="t" style="left:2.5px;top:758.69px;font-size:11px;line-height:16px;color:#000;letter-spacing:-0.163px;">Python console</span>
<svg class="a" style="left:1413px;top:760px" width="30" height="12" viewBox="0 0 30 12"><path d="M3.5 1.5h6v5h-6zM3.5 3h6M1.5 4.5h6v5h-6zM1.5 6h6" fill="#d9d9d9" stroke="#000" stroke-width="1"/><path d="M19 2l7 7M26 2l-7 7" stroke="#000" stroke-width="1.6" fill="none"/></svg>
<div class="a" style="left:1px;top:778px;width:1443px;height:104px;background:#fff;border:1px solid #828790;box-sizing:border-box;"></div>
<span class="t" style="left:6px;top:779.75px;font-size:13.33px;line-height:16px;color:#a0a0a0;font-family:'Liberation Mono',monospace;">&gt;&gt;&gt; </span>
<span class="t" style="left:38px;top:779.75px;font-size:13.33px;line-height:16px;color:#262626;font-family:'Liberation Mono',monospace;">Gui</span>
<span class="t" style="left:62px;top:779.75px;font-size:13.33px;line-height:16px;color:#a0a0a0;font-family:'Liberation Mono',monospace;">.</span>
<span class="t" style="left:70px;top:779.75px;font-size:13.33px;line-height:16px;color:#262626;font-family:'Liberation Mono',monospace;">getDocument</span>
<span class="t" style="left:158px;top:779.75px;font-size:13.33px;line-height:16px;color:#a0a0a0;font-family:'Liberation Mono',monospace;">(</span>
<span class="t" style="left:166px;top:779.75px;font-size:13.33px;line-height:16px;color:#ff1a1a;font-family:'Liberation Mono',monospace;">"tomu_0_4_case"</span>
<span class="t" style="left:286px;top:779.75px;font-size:13.33px;line-height:16px;color:#a0a0a0;font-family:'Liberation Mono',monospace;">)</span>
<span class="t" style="left:294px;top:779.75px;font-size:13.33px;line-height:16px;color:#a0a0a0;font-family:'Liberation Mono',monospace;">.</span>
<span class="t" style="left:302px;top:779.75px;font-size:13.33px;line-height:16px;color:#262626;font-family:'Liberation Mono',monospace;">getObject</span>
<span class="t" style="left:374px;top:779.75px;font-size:13.33px;line-height:16px;color:#a0a0a0;font-family:'Liberation Mono',monospace;">(</span>
<span class="t" style="left:382px;top:779.75px;font-size:13.33px;line-height:16px;color:#ff1a1a;font-family:'Liberation Mono',monospace;">"Sketch001"</span>
<span class="t" style="left:470px;top:779.75px;font-size:13.33px;line-height:16px;color:#a0a0a0;font-family:'Liberation Mono',monospace;">)</span>
<span class="t" style="left:478px;top:779.75px;font-size:13.33px;line-height:16px;color:#a0a0a0;font-family:'Liberation Mono',monospace;">.</span>
<span class="t" style="left:486px;top:779.75px;font-size:13.33px;line-height:16px;color:#262626;font-family:'Liberation Mono',monospace;">Visibility</span>
<span class="t" style="left:566px;top:779.75px;font-size:13.33px;line-height:16px;color:#a0a0a0;font-family:'Liberation Mono',monospace;">=</span>
<span class="t" style="left:574px;top:779.75px;font-size:13.33px;line-height:16px;color:#262626;font-family:'Liberation Mono',monospace;">True</span>
<span class="t" style="left:6px;top:795.75px;font-size:13.33px;line-height:16px;color:#a0a0a0;font-family:'Liberation Mono',monospace;">&gt;&gt;&gt; </span>
<span class="t" style="left:38px;top:795.75px;font-size:13.33px;line-height:16px;color:#262626;font-family:'Liberation Mono',monospace;">Gui</span>
<span class="t" style="left:62px;top:795.75px;font-size:13.33px;line-height:16px;color:#a0a0a0;font-family:'Liberation Mono',monospace;">.</span>
<span class="t" style="left:70px;top:795.75px;font-size:13.33px;line-height:16px;color:#262626;font-family:'Liberation Mono',monospace;">getDocument</span>
<span class="t" style="left:158px;top:795.75px;font-size:13.33px;line-height:16px;color:#a0a0a0;font-family:'Liberation Mono',monospace;">(</span>
<span class="t" style="left:166px;top:795.75px;font-size:13.33px;line-height:16px;color:#ff1a1a;font-family:'Liberation Mono',monospace;">"tomu_0_4_case"</span>
<span class="t" style="left:286px;top:795.75px;font-size:13.33px;line-height:16px;color:#a0a0a0;font-family:'Liberation Mono',monospace;">)</span>
<span class="t" style="left:294px;top:795.75px;font-size:13.33px;line-height:16px;color:#a0a0a0;font-family:'Liberation Mono',monospace;">.</span>
<span class="t" style="left:302px;top:795.75px;font-size:13.33px;line-height:16px;color:#262626;font-family:'Liberation Mono',monospace;">getObject</span>
<span class="t" style="left:374px;top:795.75px;font-size:13.33px;line-height:16px;color:#a0a0a0;font-family:'Liberation Mono',monospace;">(</span>
<span class="t" style="left:382px;top:795.75px;font-size:13.33px;line-height:16px;color:#ff1a1a;font-family:'Liberation Mono',monospace;">"Sketch001"</span>
<span class="t" style="left:470px;top:795.75px;font-size:13.33px;line-height:16px;color:#a0a0a0;font-family:'Liberation Mono',monospace;">)</span>
<span class="t" style="left:478px;top:795.75px;font-size:13.33px;line-height:16px;color:#a0a0a0;font-family:'Liberation Mono',monospace;">.</span>
<span class="t" style="left:486px;top:795.75px;font-size:13.33px;line-height:16px;color:#262626;font-family:'Liberation Mono',monospace;">Visibility</span>
<span class="t" style="left:566px;top:795.75px;font-size:13.33px;line-height:16px;color:#a0a0a0;font-family:'Liberation Mono',monospace;">=</span>
<span class="t" style="left:574px;top:795.75px;font-size:13.33px;line-height:16px;color:#262626;font-family:'Liberation Mono',monospace;">False</span>
<span class="t" style="left:6px;top:811.75px;font-size:13.33px;line-height:16px;color:#a0a0a0;font-family:'Liberation Mono',monospace;">&gt;&gt;&gt; </span>
<span class="t" style="left:38px;top:811.75px;font-size:13.33px;line-height:16px;color:#262626;font-family:'Liberation Mono',monospace;">Gui</span>
<span class="t" style="left:62px;top:811.75px;font-size:13.33px;line-height:16px;color:#a0a0a0;font-family:'Liberation Mono',monospace;">.</span>
<span class="t" style="left:70px;top:811.75px;font-size:13.33px;line-height:16px;color:#262626;font-family:'Liberation Mono',monospace;">getDocument</span>
<span class="t" style="left:158px;top:811.75px;font-size:13.33px;line-height:16px;color:#a0a0a0;font-family:'Liberation Mono',monospace;">(</span>
<span class="t" style="left:166px;top:811.75px;font-size:13.33px;line-height:16px;color:#ff1a1a;font-family:'Liberation Mono',monospace;">"tomu_0_4_case"</span>
<span class="t" style="left:286px;top:811.75px;font-size:13.33px;line-height:16px;color:#a0a0a0;font-family:'Liberation Mono',monospace;">)</span>
<span class="t" style="left:294px;top:811.75px;font-size:13.33px;line-height:16px;color:#a0a0a0;font-family:'Liberation Mono',monospace;">.</span>
<span class="t" style="left:302px;top:811.75px;font-size:13.33px;line-height:16px;color:#262626;font-family:'Liberation Mono',monospace;">getObject</span>
<span class="t" style="left:374px;top:811.75px;font-size:13.33px;line-height:16px;color:#a0a0a0;font-family:'Liberation Mono',monospace;">(</span>
<span class="t" style="left:382px;top:811.75px;font-size:13.33px;line-height:16px;color:#ff1a1a;font-family:'Liberation Mono',monospace;">"Pocket"</span>
<span class="t" style="left:446px;top:811.75px;font-size:13.33px;line-height:16px;color:#a0a0a0;font-family:'Liberation Mono',monospace;">)</span>
<span class="t" style="left:454px;top:811.75px;font-size:13.33px;line-height:16px;color:#a0a0a0;font-family:'Liberation Mono',monospace;">.</span>
<span class="t" style="left:462px;top:811.75px;font-size:13.33px;line-height:16px;color:#262626;font-family:'Liberation Mono',monospace;">Visibility</span>
<span class="t" style="left:542px;top:811.75px;font-size:13.33px;line-height:16px;color:#a0a0a0;font-family:'Liberation Mono',monospace;">=</span>
<span class="t" style="left:550px;top:811.75px;font-size:13.33px;line-height:16px;color:#262626;font-family:'Liberation Mono',monospace;">True</span>
<span class="t" style="left:6px;top:827.75px;font-size:13.33px;line-height:16px;color:#a0a0a0;font-family:'Liberation Mono',monospace;">&gt;&gt;&gt; </span>
<span class="t" style="left:38px;top:827.75px;font-size:13.33px;line-height:16px;color:#262626;font-family:'Liberation Mono',monospace;">Gui</span>
<span class="t" style="left:62px;top:827.75px;font-size:13.33px;line-height:16px;color:#a0a0a0;font-family:'Liberation Mono',monospace;">.</span>
<span class="t" style="left:70px;top:827.75px;font-size:13.33px;line-height:16px;color:#262626;font-family:'Liberation Mono',monospace;">getDocument</span>
<span class="t" style="left:158px;top:827.75px;font-size:13.33px;line-height:16px;color:#a0a0a0;font-family:'Liberation Mono',monospace;">(</span>
<span class="t" style="left:166px;top:827.75px;font-size:13.33px;line-height:16px;color:#ff1a1a;font-family:'Liberation Mono',monospace;">"tomu_0_4_case"</span>
<span class="t" style="left:286px;top:827.75px;font-size:13.33px;line-height:16px;color:#a0a0a0;font-family:'Liberation Mono',monospace;">)</span>
<span class="t" style="left:294px;top:827.75px;font-size:13.33px;line-height:16px;color:#a0a0a0;font-family:'Liberation Mono',monospace;">.</span>
<span class="t" style="left:302px;top:827.75px;font-size:13.33px;line-height:16px;color:#262626;font-family:'Liberation Mono',monospace;">getObject</span>
<span class="t" style="left:374px;top:827.75px;font-size:13.33px;line-height:16px;color:#a0a0a0;font-family:'Liberation Mono',monospace;">(</span>
<span class="t" style="left:382px;top:827.75px;font-size:13.33px;line-height:16px;color:#ff1a1a;font-family:'Liberation Mono',monospace;">"Pad"</span>
<span class="t" style="left:422px;top:827.75px;font-size:13.33px;line-height:16px;color:#a0a0a0;font-family:'Liberation Mono',monospace;">)</span>
<span class="t" style="left:430px;top:827.75px;font-size:13.33px;line-height:16px;color:#a0a0a0;font-family:'Liberation Mono',monospace;">.</span>
<span class="t" style="left:438px;top:827.75px;font-size:13.33px;line-height:16px;color:#262626;font-family:'Liberation Mono',monospace;">Visibility</span>
<span class="t" style="left:518px;top:827.75px;font-size:13.33px;line-height:16px;color:#a0a0a0;font-family:'Liberation Mono',monospace;">=</span>
<span class="t" style="left:526px;top:827.75px;font-size:13.33px;line-height:16px;color:#262626;font-family:'Liberation Mono',monospace;">False</span>
<span class="t" style="left:6px;top:843.75px;font-size:13.33px;line-height:16px;color:#a0a0a0;font-family:'Liberation Mono',monospace;">&gt;&gt;&gt; </span>
<span class="t" style="left:38px;top:843.75px;font-size:13.33px;line-height:16px;color:#262626;font-family:'Liberation Mono',monospace;">Gui</span>
<span class="t" style="left:62px;top:843.75px;font-size:13.33px;line-height:16px;color:#a0a0a0;font-family:'Liberation Mono',monospace;">.</span>
<span class="t" style="left:70px;top:843.75px;font-size:13.33px;line-height:16px;color:#262626;font-family:'Liberation Mono',monospace;">getDocument</span>
<span class="t" style="left:158px;top:843.75px;font-size:13.33px;line-height:16px;color:#a0a0a0;font-family:'Liberation Mono',monospace;">(</span>
<span class="t" style="left:166px;top:843.75px;font-size:13.33px;line-height:16px;color:#ff1a1a;font-family:'Liberation Mono',monospace;">"tomu_0_4_case"</span>
<span class="t" style="left:286px;top:843.75px;font-size:13.33px;line-height:16px;color:#a0a0a0;font-family:'Liberation Mono',monospace;">)</span>
<span class="t" style="left:294px;top:843.75px;font-size:13.33px;line-height:16px;color:#a0a0a0;font-family:'Liberation Mono',monospace;">.</span>
<span class="t" style="left:302px;top:843.75px;font-size:13.33px;line-height:16px;color:#262626;font-family:'Liberation Mono',monospace;">getObject</span>
<span class="t" style="left:374px;top:843.75px;font-size:13.33px;line-height:16px;color:#a0a0a0;font-family:'Liberation Mono',monospace;">(</span>
<span class="t" style="left:382px;top:843.75px;font-size:13.33px;line-height:16px;color:#ff1a1a;font-family:'Liberation Mono',monospace;">"Pcb"</span>
<span class="t" style="left:422px;top:843.75px;font-size:13.33px;line-height:16px;color:#a0a0a0;font-family:'Liberation Mono',monospace;">)</span>
<span class="t" style="left:430px;top:843.75px;font-size:13.33px;line-height:16px;color:#a0a0a0;font-family:'Liberation Mono',monospace;">.</span>
<span class="t" style="left:438px;top:843.75px;font-size:13.33px;line-height:16px;color:#262626;font-family:'Liberation Mono',monospace;">Visibility</span>
<span class="t" style="left:518px;top:843.75px;font-size:13.33px;line-height:16px;color:#a0a0a0;font-family:'Liberation Mono',monospace;">=</span>
<span class="t" style="left:526px;top:843.75px;font-size:13.33px;line-height:16px;color:#262626;font-family:'Liberation Mono',monospace;">False</span>
<span class="t" style="left:6px;top:859.75px;font-size:13.33px;line-height:16px;color:#a0a0a0;font-family:'Liberation Mono',monospace;">&gt;&gt;&gt; </span>
<div class="a" style="left:1427px;top:779px;width:16px;height:102px;background:#f0f0f0;"></div>
<div class="a" style="left:1427px;top:846px;width:16px;height:18px;background:#cdcdcd;"></div>
<svg class="a" style="left:1427px;top:779px;" width="16" height="17" viewBox="0 0 16 17"><path d="M4.5 10.5l3.5-3.5 3.5 3.5" fill="none" stroke="#404040" stroke-width="1.7"/></svg>
<svg class="a" style="left:1427px;top:864px;" width="16" height="17" viewBox="0 0 16 17"><path d="M4.5 6.5l3.5 3.5 3.5-3.5" fill="none" stroke="#404040" stroke-width="1.7"/></svg>
<div class="a" style="left:1218px;top:884px;width:1px;height:25px;background:#d7d7d7;"></div>
<div class="a" style="left:1299px;top:884px;width:1px;height:25px;background:#d7d7d7;"></div>
<div class="a" style="left:1425px;top:884px;width:1px;height:25px;background:#d7d7d7;"></div>
<svg class="a" style="left:1239px;top:889px;" width="14" height="18" viewBox="0 0 14 18"><rect x="3" y="2.5" width="8" height="13" rx="3.5" fill="none" stroke="#404040" stroke-width="1.5"/><path d="M7 5v3.5" stroke="#404040" stroke-width="1.4"/></svg>
<span class="t" style="left:1258px;top:889.14px;font-size:12px;line-height:16px;color:#000;letter-spacing:-0.281px;">CAD</span>
<svg class="a" style="left:1284px;top:894px;" width="9" height="6" viewBox="0 0 9 6"><path d="M0 0h8.5L4.25 4.6z" fill="#000"/></svg>
<span class="t" style="left:1304px;top:889.14px;font-size:12px;line-height:16px;color:#000;letter-spacing:-0.229px;">26.24 mm x 13.61 mm</span>
<svg class="a" style="left:1430px;top:896px;" width="13" height="13" viewBox="0 0 13 13"><rect x="9" y="1" width="2" height="2" fill="#bdbdbd"/><rect x="5" y="5" width="2" height="2" fill="#bdbdbd"/><rect x="9" y="5" width="2" height="2" fill="#bdbdbd"/><rect x="1" y="9" width="2" height="2" fill="#bdbdbd"/><rect x="5" y="9" width="2" height="2" fill="#bdbdbd"/><rect x="9" y="9" width="2" height="2" fill="#bdbdbd"/></svg>
<svg class="a" style="left:13px;top:56px" width="26" height="26" viewBox="-1.0 -1.0 26.0 26.0"><rect x="2.5" y="1.5" width="19" height="21" fill="url(#gG)" stroke="#b4b4b4"/><path d="M4 4v2M4 8v2M4 12v2" stroke="#d0d0d0" stroke-width=".8"/><circle cx="18.5" cy="5.5" r="5" fill="url(#gGlow)"/></svg>
<svg class="a" style="left:44px;top:56px" width="26" height="26" viewBox="-1.0 -1.0 26.0 26.0"><path d="M1 3.5l5-1.5.5 1.5H21V9H6L2 20H1z" fill="#7c7c7c" stroke="#585858" stroke-width=".8"/><path d="M7 2.5h14v8H7z" fill="url(#gG)" stroke="#a0a0a0" stroke-width=".7"/><path d="M6 9h18.5l-3.5 11H2.5z" fill="url(#gFo)" stroke="#4878b4" stroke-width=".9"/></svg>
<svg class="a" style="left:75px;top:56px" width="26" height="26" viewBox="-1.0 -1.0 26.0 26.0"><path d="M5 7h14l4 9v6.5H1V16z" fill="url(#gG)" stroke="#a8a8a8" stroke-width=".9"/><path d="M1.5 16.5h21v5.5h-21z" fill="url(#gG2)" stroke="#9a9a9a" stroke-width=".8"/><path d="M4 19.5h6" stroke="#888" stroke-width="1.4"/><path d="M2.5 5C5 0.5 13 0 14.5 6.5h3.8l-6.4 8-6.2-8H9.5C9 3.5 5 3 2.5 5z" fill="#3a74c0" stroke="#2a5ea8" stroke-width=".6"/></svg>
<svg class="a" style="left:106px;top:56px" width="26" height="26" viewBox="-1.0 -1.0 26.0 26.0"><path d="M5.5 2h13v9h-13z" fill="#e6e6e6" stroke="#c8c8c8" stroke-width=".8"/><path d="M12 4.5l3 3.2h-1.8V10h-2.4V7.700H9z" fill="#b4b4b4"/><rect x="1.500" y="10.500" width="21" height="9" rx="2" fill="url(#gG)" stroke="#b8b8b8"/><rect x="3.500" y="13.500" width="17" height="3.500" rx="1" fill="#f8f8f8" stroke="#c4c4c4" stroke-width=".8"/><path d="M2.500 19.500h19v2h-19z" fill="#d0d0d0" stroke="#bcbcbc" stroke-width=".6"/></svg>
<svg class="a" style="left:143px;top:56px" width="26" height="26" viewBox="-1.0 -1.0 26.0 26.0"><path d="M5.500 1.500L13 15M18.500 1.500L11 15" stroke="#cecece" stroke-width="3" fill="none"/><path d="M5.500 1.500L13 15M18.500 1.500L11 15" stroke="#f0f0f0" stroke-width="1.300" fill="none"/><ellipse cx="6.500" cy="18.500" rx="4.500" ry="3" transform="rotate(-40 6.500 18.500)" fill="none" stroke="#9a9a9a" stroke-width="2.200"/><ellipse cx="17.500" cy="18.500" rx="4.500" ry="3" transform="rotate(40 17.500 18.500)" fill="none" stroke="#9a9a9a" stroke-width="2.200"/></svg>
<svg class="a" style="left:173.5px;top:56px" width="26" height="26" viewBox="-1.0 -1.0 26.0 26.0"><path d="M1.500 1h15v17h-15z" fill="#f6f6f6" stroke="#c8c8c8" stroke-width=".9"/><path d="M4 6h9M4 8.500h9M4 11h4" stroke="#d8d8d8" stroke-width="1"/><path d="M8.500 6h15v13l-4 4h-11z" fill="url(#gG)" stroke="#c0c0c0" stroke-width=".9"/><path d="M11 10h9v7h-9z" fill="#d4d4d4"/><path d="M23.500 19l-4 4v-4z" fill="#bdbdbd"/></svg>
<svg class="a" style="left:205px;top:56px" width="26" height="26" viewBox="-1.0 -1.0 26.0 26.0"><rect x="2.500" y="2.500" width="19" height="20.500" rx="1" fill="#c2c2c2" stroke="#b4b4b4"/><path d="M5 5.500h14v15.500h-14z" fill="url(#gG)"/><path d="M8 1h8v3.500H8z" fill="#b0b0b0"/><path d="M7 4h10v1.500H7z" fill="#a8a8a8"/><path d="M8 9h8v8H8z" fill="#dedede"/><path d="M19 17l-4 4h4z" fill="#b4b4b4"/></svg>
<svg class="a" style="left:241.5px;top:56px" width="26" height="26" viewBox="-1.0 -1.0 26.0 26.0"><ellipse cx="12" cy="21.500" rx="8.500" ry="1.600" fill="#000" opacity=".10"/><path d="M10 1L2 9.500l8 6V11c4.500-.5 7 2.500 4.500 9.500C21 15 20 6 10 5.800z" fill="#f0dc22" stroke="#e8d000" stroke-width=".6"/><path d="M10 1L2 9.500l2 1.300L10 4z" fill="#f8ec70"/></svg>
<svg class="a" style="left:285.5px;top:56px" width="26" height="26" viewBox="-1.0 -1.0 26.0 26.0"><ellipse cx="12" cy="21.500" rx="8.500" ry="1.600" fill="#000" opacity=".05"/><path d="M14 1l8 8.500-8 6V11c-4.500-.5-7 2.500-4.500 9.500C3 15 4 6 14 5.800z" fill="#d2d2d2" stroke="#c8c8c8" stroke-width=".6"/></svg>
<svg class="a" style="left:334px;top:56px" width="26" height="26" viewBox="-1.0 -1.0 26.0 26.0"><path d="M3 11C3 4.500 10 1 15.500 4.500L18 1.500 20 10H11.500l2.300-2.700C10.500 5 6.500 7 6.300 11z" fill="#b8b8b8" stroke="#a4a4a4" stroke-width=".7"/><path d="M21 12c0 6.500-7 10-12.500 6.500L6 21.500 4 13h8.500l-2.300 2.700c3.300 2.300 7.300.3 7.500-3.700z" fill="#b8b8b8" stroke="#a4a4a4" stroke-width=".7"/></svg>
<svg class="a" style="left:371px;top:56px" width="26" height="26" viewBox="-1.0 -1.0 26.0 26.0"><path d="M1 1l13.500 11.500-5.700.6 4.700 8.400-3 1.500-4.500-8.500L2 18.500z" fill="#70706a" stroke="#4c4c46" stroke-width=".9"/><path d="M13.500 5.500C13.500 1 22.500.500 22.500 6c0 3.500-4.500 4-4.500 8.500" fill="none" stroke="#3a6eb4" stroke-width="2.600"/><circle cx="18" cy="19.800" r="1.700" fill="#3a6eb4"/></svg>
<svg class="a" style="left:273px;top:67px" width="8" height="5" viewBox="0 0 8 5"><path d="M0 0h7.500L3.750 4.300z" fill="#1a1a1a"/></svg>
<svg class="a" style="left:316px;top:67px" width="8" height="5" viewBox="0 0 8 5"><path d="M0 0h7.500L3.750 4.300z" fill="#8a8a8a"/></svg>
<div class="a" style="left:137px;top:57px;width:1px;height:24px;background:#c5c5c5;"></div>
<div class="a" style="left:236px;top:57px;width:1px;height:24px;background:#c5c5c5;"></div>
<div class="a" style="left:328px;top:57px;width:1px;height:24px;background:#c5c5c5;"></div>
<div class="a" style="left:365px;top:57px;width:1px;height:24px;background:#c5c5c5;"></div>
<div class="a" style="left:412px;top:58px;width:145px;height:22px;background:#e1e1e1;border:1px solid #adadad;box-sizing:border-box;"></div>
<svg class="a" style="left:416px;top:60px" width="18" height="18" viewBox="-0.6666666666666666 -0.6666666666666666 17.333333333333332 17.333333333333332"><path d="M2 6l6-3 6.500 2.500V13L8 16 2 13z" fill="url(#gB)" stroke="#0b2c55" stroke-width=".8" transform="translate(0 -1)"/><path d="M2 2.500l4-2 3.500 4-3 2z" fill="#e8d060" stroke="#5a4a00" stroke-width=".6"/><path d="M7 6l2.500 2.800L9.800 6z" fill="#f4f4f4" stroke="#333" stroke-width=".4"/></svg>
<span class="t" style="left:435px;top:61.04px;font-size:12px;line-height:16px;color:#000;letter-spacing:-0.653px;">Part Design</span>
<svg class="a" style="left:543.5px;top:67px" width="8" height="5" viewBox="0 0 8 5"><path d="M0 0h7.500L3.750 4.300z" fill="#1a1a1a"/></svg>
<div class="a" style="left:558px;top:52px;width:1px;height:33px;background:#a0a0a0;"></div>
<div class="a" style="left:559px;top:52px;width:1px;height:33px;background:#fff;"></div>
<svg class="a" style="left:564px;top:56px;" width="4" height="29" viewBox="0 0 4 29"><path d="M3.200 0.3v2.400h-2.400z" fill="#a2a2a2"/><path d="M3.200 4.3v2.400h-2.400z" fill="#a2a2a2"/><path d="M3.200 8.3v2.400h-2.400z" fill="#a2a2a2"/><path d="M3.200 12.3v2.400h-2.400z" fill="#a2a2a2"/><path d="M3.200 16.3v2.400h-2.400z" fill="#a2a2a2"/><path d="M3.200 20.3v2.400h-2.400z" fill="#a2a2a2"/><path d="M3.200 24.3v2.400h-2.400z" fill="#a2a2a2"/></svg>
<svg class="a" style="left:571px;top:56px" width="26" height="26" viewBox="-1.0 -1.0 26.0 26.0"><circle cx="12" cy="12" r="10.800" fill="#d81818" stroke="#8c0808" stroke-width=".9"/><ellipse cx="10.500" cy="8" rx="6.500" ry="4.500" fill="#f04040" opacity=".5"/></svg>
<svg class="a" style="left:602px;top:56px" width="26" height="26" viewBox="-1.0 -1.0 26.0 26.0"><rect x=".5" y="1" width="22.500" height="22" rx="1" fill="#c4c4c4" stroke="#b0b0b0"/></svg>
<svg class="a" style="left:633px;top:56px" width="26" height="26" viewBox="-1.0 -1.0 26.0 26.0"><path d="M2 3.500h19v18.500H2z" fill="url(#gG)" stroke="#b0b0b0" stroke-width=".8"/><path d="M2.500 2.500h18v3h-18z" fill="#d8c060" stroke="#b09830" stroke-width=".6"/><path d="M5 9h12M5 12h8M5 15h5" stroke="#c0c0c0" stroke-width="1"/><path d="M8 17.500l1.500-3.500 10.500-5 1.700 2.500-10.500 5z" fill="#f0a030" stroke="#b06010" stroke-width=".7"/><path d="M20 9l1.700 2.500 1.300-.8-1.500-2.500z" fill="#e04040"/><path d="M8 17.500l1.300-.4-.6-1z" fill="#222"/></svg>
<svg class="a" style="left:664px;top:56px" width="26" height="26" viewBox="-1.0 -1.0 26.0 26.0"><path d="M1.500 1.500L23 12 1.500 23z" fill="#bcbcbc" stroke="#a8a8a8" stroke-width=".9"/></svg>
<svg class="a" style="left:13px;top:90px" width="26" height="26" viewBox="-1.0 -1.0 26.0 26.0"><path d="M3.500 1h18v22.500h-14l-4-4z" fill="url(#gG)" stroke="#b0b0b0" stroke-width=".9"/><path d="M3.500 19.500l4 4v-5z" fill="#7a7a7a"/><path d="M15 14l5.500 5.500" stroke="#0a727a" stroke-width="3.800" stroke-linecap="round"/><path d="M15 14l5.500 5.500" stroke="#22c8d2" stroke-width="2.200" stroke-linecap="round"/><circle cx="11.500" cy="10.500" r="5.500" fill="url(#gT)" stroke="#0a727a" stroke-width="1"/></svg>
<svg class="a" style="left:43px;top:90px" width="26" height="26" viewBox="-1.0 -1.0 26.0 26.0"><path d="M14.500 14.500l7.500 7.500" stroke="#0a727a" stroke-width="4.200" stroke-linecap="round"/><path d="M14.500 14.500l7.500 7.500" stroke="#22c8d2" stroke-width="2.600" stroke-linecap="round"/><circle cx="10" cy="8.500" r="7.500" fill="url(#gT)" stroke="#0a727a" stroke-width="1"/><path d="M14.500 3.500l-1 6-1.700-1.700-5.300 5.200-1.500-1.500 5.300-5.200-1.800-1.800z" fill="#f4f4f4" stroke="#555" stroke-width=".7"/></svg>
<svg class="a" style="left:75px;top:90px" width="26" height="26" viewBox="-1.0 -1.0 26.0 26.0"><path d="M12 .8l10.500 5.700v11.500L12 23.500 1.500 18V6.500z" fill="url(#gT)" stroke="#0a727a" stroke-width="1.100"/><circle cx="12" cy="12" r="7.300" fill="none" stroke="#7a0000" stroke-width="3.200"/><circle cx="12" cy="12" r="7.300" fill="none" stroke="#e01010" stroke-width="2.200"/><path d="M7 7l10 10" stroke="#7a0000" stroke-width="3.400"/><path d="M7.300 7.300l9.400 9.400" stroke="#e01010" stroke-width="2.300"/></svg>
<svg class="a" style="left:124px;top:90px" width="26" height="26" viewBox="-1.0 -1.0 26.0 26.0"><path d="M12 11.500V22.500M12 11.500L1.800 6.500M12 11.500l10.200-5" stroke="#0a727a" stroke-width="2.200" fill="none"/><path d="M12 11.500V22.500M12 11.500L1.800 6.500M12 11.500l10.200-5" stroke="#2ad4dc" stroke-width="1" fill="none"/><path d="M12 6V3.500M7.500 16.500l-2 1.200M16.500 16.500l2 1.200" stroke="#0a3a40" stroke-width="2" stroke-linecap="round"/><path d="M12 1l10.500 5.300v11.400L12 23 1.500 17.700V6.300z" fill="none" stroke="#0a727a" stroke-width="2.400" stroke-linejoin="round"/><path d="M12 1l10.500 5.300v11.400L12 23 1.500 17.700V6.300z" fill="none" stroke="#2ad4dc" stroke-width="1.100" stroke-linejoin="round"/></svg>
<svg class="a" style="left:161px;top:90px" width="26" height="26" viewBox="-1.0 -1.0 26.0 26.0"><path d="M9.0,17.8L9.0,1.2000000000000002M9.0,17.8L22.8,17.8M9.0,17.8L1.2,22.8" fill="none" stroke="#0a727a" stroke-width="1.700"/><path d="M9.0,17.8L9.0,1.2000000000000002M9.0,17.8L22.8,17.8M9.0,17.8L1.2,22.8" fill="none" stroke="#2ad4dc" stroke-width=".7"/><polygon points="1.2,6.2 15,6.2 15,22.8 1.2,22.8" fill="url(#gT)" stroke="#0a727a" stroke-width=".8"/><path d="M1.2,6.2L15,6.2L15,22.8L1.2,22.8zM1.2,6.2L9.0,1.2000000000000002L22.8,1.2000000000000002L22.8,17.8L15,22.8M15,6.2L22.8,1.2000000000000002" fill="none" stroke="#0a727a" stroke-width="1.900" stroke-linejoin="round"/><path d="M1.2,6.2L15,6.2L15,22.8L1.2,22.8zM1.2,6.2L9.0,1.2000000000000002L22.8,1.2000000000000002L22.8,17.8L15,22.8M15,6.2L22.8,1.2000000000000002" fill="none" stroke="#2ad4dc" stroke-width=".8" stroke-linejoin="round"/></svg>
<svg class="a" style="left:192px;top:90px" width="26" height="26" viewBox="-1.0 -1.0 26.0 26.0"><path d="M9.0,17.8L9.0,1.2000000000000002M9.0,17.8L22.8,17.8M9.0,17.8L1.2,22.8" fill="none" stroke="#0a727a" stroke-width="1.700"/><path d="M9.0,17.8L9.0,1.2000000000000002M9.0,17.8L22.8,17.8M9.0,17.8L1.2,22.8" fill="none" stroke="#2ad4dc" stroke-width=".7"/><path d="M11.500 9.500V7.500M7.500 16l-2 1.500M14 14.500l1.500 .7" stroke="#0a3a40" stroke-width="1.800" stroke-linecap="round"/><path d="M11.500 11v2.500l-2.500 1.800M11.500 13.500l1.800 .7" stroke="#2ad4dc" stroke-width=".9" fill="none"/><polygon points="1.2,6.2 15,6.2 22.8,1.2000000000000002 9.0,1.2000000000000002" fill="url(#gT)" stroke="#0a727a" stroke-width=".8"/><path d="M1.2,6.2L15,6.2L15,22.8L1.2,22.8zM1.2,6.2L9.0,1.2000000000000002L22.8,1.2000000000000002L22.8,17.8L15,22.8M15,6.2L22.8,1.2000000000000002" fill="none" stroke="#0a727a" stroke-width="1.900" stroke-linejoin="round"/><path d="M1.2,6.2L15,6.2L15,22.8L1.2,22.8zM1.2,6.2L9.0,1.2000000000000002L22.8,1.2000000000000002L22.8,17.8L15,22.8M15,6.2L22.8,1.2000000000000002" fill="none" stroke="#2ad4dc" stroke-width=".8" stroke-linejoin="round"/></svg>
<svg class="a" style="left:223px;top:90px" width="26" height="26" viewBox="-1.0 -1.0 26.0 26.0"><path d="M9.0,17.8L9.0,1.2000000000000002M9.0,17.8L22.8,17.8M9.0,17.8L1.2,22.8" fill="none" stroke="#0a727a" stroke-width="1.700"/><path d="M9.0,17.8L9.0,1.2000000000000002M9.0,17.8L22.8,17.8M9.0,17.8L1.2,22.8" fill="none" stroke="#2ad4dc" stroke-width=".7"/><path d="M11.500 9.500V7.500M7.500 16l-2 1.500M14 14.500l1.500 .7" stroke="#0a3a40" stroke-width="1.800" stroke-linecap="round"/><path d="M11.500 11v2.500l-2.500 1.800M11.500 13.500l1.800 .7" stroke="#2ad4dc" stroke-width=".9" fill="none"/><polygon points="15,6.2 22.8,1.2000000000000002 22.8,17.8 15,22.8" fill="url(#gT)" stroke="#0a727a" stroke-width=".8"/><path d="M1.2,6.2L15,6.2L15,22.8L1.2,22.8zM1.2,6.2L9.0,1.2000000000000002L22.8,1.2000000000000002L22.8,17.8L15,22.8M15,6.2L22.8,1.2000000000000002" fill="none" stroke="#0a727a" stroke-width="1.900" stroke-linejoin="round"/><path d="M1.2,6.2L15,6.2L15,22.8L1.2,22.8zM1.2,6.2L9.0,1.2000000000000002L22.8,1.2000000000000002L22.8,17.8L15,22.8M15,6.2L22.8,1.2000000000000002" fill="none" stroke="#2ad4dc" stroke-width=".8" stroke-linejoin="round"/></svg>
<svg class="a" style="left:259.5px;top:90px" width="26" height="26" viewBox="-1.0 -1.0 26.0 26.0"><path d="M9.0,17.8L9.0,1.2000000000000002M9.0,17.8L22.8,17.8M9.0,17.8L1.2,22.8" fill="none" stroke="#0a727a" stroke-width="1.700"/><path d="M9.0,17.8L9.0,1.2000000000000002M9.0,17.8L22.8,17.8M9.0,17.8L1.2,22.8" fill="none" stroke="#2ad4dc" stroke-width=".7"/><polygon points="9.0,1.2000000000000002 22.8,1.2000000000000002 22.8,17.8 9.0,17.8" fill="url(#gT)" stroke="#0a727a" stroke-width=".8"/><path d="M11.500 9.500V7.500M7.500 16l-2 1.500M14 14.500l1.500 .7" stroke="#0a3a40" stroke-width="1.800" stroke-linecap="round"/><path d="M11.500 11v2.500l-2.500 1.800M11.500 13.500l1.800 .7" stroke="#2ad4dc" stroke-width=".9" fill="none"/><path d="M1.2,6.2L15,6.2L15,22.8L1.2,22.8zM1.2,6.2L9.0,1.2000000000000002L22.8,1.2000000000000002L22.8,17.8L15,22.8M15,6.2L22.8,1.2000000000000002" fill="none" stroke="#0a727a" stroke-width="1.900" stroke-linejoin="round"/><path d="M1.2,6.2L15,6.2L15,22.8L1.2,22.8zM1.2,6.2L9.0,1.2000000000000002L22.8,1.2000000000000002L22.8,17.8L15,22.8M15,6.2L22.8,1.2000000000000002" fill="none" stroke="#2ad4dc" stroke-width=".8" stroke-linejoin="round"/></svg>
<svg class="a" style="left:290.5px;top:90px" width="26" height="26" viewBox="-1.0 -1.0 26.0 26.0"><path d="M9.0,17.8L9.0,1.2000000000000002M9.0,17.8L22.8,17.8M9.0,17.8L1.2,22.8" fill="none" stroke="#0a727a" stroke-width="1.700"/><path d="M9.0,17.8L9.0,1.2000000000000002M9.0,17.8L22.8,17.8M9.0,17.8L1.2,22.8" fill="none" stroke="#2ad4dc" stroke-width=".7"/><polygon points="1.2,22.8 15,22.8 22.8,17.8 9.0,17.8" fill="url(#gT)" stroke="#0a727a" stroke-width=".8"/><path d="M11.500 9.500V7.500M7.500 16l-2 1.500M14 14.500l1.500 .7" stroke="#0a3a40" stroke-width="1.800" stroke-linecap="round"/><path d="M11.500 11v2.500l-2.500 1.800M11.500 13.500l1.800 .7" stroke="#2ad4dc" stroke-width=".9" fill="none"/><path d="M1.2,6.2L15,6.2L15,22.8L1.2,22.8zM1.2,6.2L9.0,1.2000000000000002L22.8,1.2000000000000002L22.8,17.8L15,22.8M15,6.2L22.8,1.2000000000000002" fill="none" stroke="#0a727a" stroke-width="1.900" stroke-linejoin="round"/><path d="M1.2,6.2L15,6.2L15,22.8L1.2,22.8zM1.2,6.2L9.0,1.2000000000000002L22.8,1.2000000000000002L22.8,17.8L15,22.8M15,6.2L22.8,1.2000000000000002" fill="none" stroke="#2ad4dc" stroke-width=".8" stroke-linejoin="round"/></svg>
<svg class="a" style="left:321.5px;top:90px" width="26" height="26" viewBox="-1.0 -1.0 26.0 26.0"><path d="M9.0,17.8L9.0,1.2000000000000002M9.0,17.8L22.8,17.8M9.0,17.8L1.2,22.8" fill="none" stroke="#0a727a" stroke-width="1.700"/><path d="M9.0,17.8L9.0,1.2000000000000002M9.0,17.8L22.8,17.8M9.0,17.8L1.2,22.8" fill="none" stroke="#2ad4dc" stroke-width=".7"/><polygon points="1.2,6.2 9.0,1.2000000000000002 9.0,17.8 1.2,22.8" fill="url(#gT)" stroke="#0a727a" stroke-width=".8"/><path d="M11.500 9.500V7.500M7.500 16l-2 1.500M14 14.500l1.500 .7" stroke="#0a3a40" stroke-width="1.800" stroke-linecap="round"/><path d="M11.500 11v2.500l-2.500 1.800M11.500 13.500l1.800 .7" stroke="#2ad4dc" stroke-width=".9" fill="none"/><path d="M1.2,6.2L15,6.2L15,22.8L1.2,22.8zM1.2,6.2L9.0,1.2000000000000002L22.8,1.2000000000000002L22.8,17.8L15,22.8M15,6.2L22.8,1.2000000000000002" fill="none" stroke="#0a727a" stroke-width="1.900" stroke-linejoin="round"/><path d="M1.2,6.2L15,6.2L15,22.8L1.2,22.8zM1.2,6.2L9.0,1.2000000000000002L22.8,1.2000000000000002L22.8,17.8L15,22.8M15,6.2L22.8,1.2000000000000002" fill="none" stroke="#2ad4dc" stroke-width=".8" stroke-linejoin="round"/></svg>
<svg class="a" style="left:358px;top:90px" width="26" height="26" viewBox="-1.0 -1.0 26.0 26.0"><path d="M3 5.500L7.500 1.500 21.500 16.500V21l-4 2.500V19z" fill="url(#gT)" stroke="#0a727a" stroke-width=".9"/><path d="M17.500 19l4-2.500" stroke="#0a727a" stroke-width=".8"/><path d="M8.500 5.500l2-1.800M11 8.200l2-1.800M13.500 10.900l2-1.800M16 13.600l2-1.800M18.500 16.300l1.500-1.300" stroke="#0a5a62" stroke-width="1"/></svg>
<svg class="a" style="left:402px;top:90px" width="26" height="26" viewBox="-1.0 -1.0 26.0 26.0"><path d="M3.200 7.400L10.700 1.800 15.700 3.800 8.400 9.100z" fill="url(#gY)"/><path d="M8.400 9.100L15.700 3.800V9.100L8.400 15z" fill="url(#gYd)"/><path d="M8.400 15L15.700 9.100 20.600 10.400 13.700 17z" fill="url(#gY)"/><path d="M3.200 7.400L8.400 9.100V15L13.700 17V22.200L3.200 18.300z" fill="url(#gY)"/><path d="M13.700 17L20.600 10.400V16.300L13.700 22.200z" fill="url(#gYd)"/><path d="M3.200 7.400L10.700 1.800 15.700 3.800V9.100L20.600 10.400V16.300L13.700 22.200 3.200 18.300zM3.200 7.400L8.400 9.100 15.700 3.800M8.400 9.100V15L13.700 17 20.600 10.400M8.400 15L15.700 9.100M13.700 17V22.200" fill="none" stroke="#3a3000" stroke-width="1" stroke-linejoin="round"/></svg>
<svg class="a" style="left:433px;top:90px" width="26" height="26" viewBox="-1.0 -1.0 26.0 26.0"><path d="M1.500 4.500l.8-2h7l1 2H22v3H1.500z" fill="#8a8a8a" stroke="#6e6e6e" stroke-width=".7"/><path d="M2 6.500h20.500V20H2z" fill="url(#gFo)" stroke="#4a7ab8" stroke-width=".9"/></svg>
<svg class="a" style="left:106px;top:101px" width="8" height="5" viewBox="0 0 8 5"><path d="M0 0h7.500L3.750 4.300z" fill="#1a1a1a"/></svg>
<div class="a" style="left:118px;top:91px;width:1px;height:24px;background:#c5c5c5;"></div>
<div class="a" style="left:155px;top:91px;width:1px;height:24px;background:#c5c5c5;"></div>
<div class="a" style="left:254px;top:91px;width:1px;height:24px;background:#c5c5c5;"></div>
<div class="a" style="left:353px;top:91px;width:1px;height:24px;background:#c5c5c5;"></div>
<svg class="a" style="left:13px;top:124px" width="26" height="26" viewBox="-1.0 -1.0 26.0 26.0"><path d="M12 14.500l10.500 3.500L12 22.500 1.500 18z" fill="none" stroke="#555" stroke-width="1"/><path d="M12 16.500l6 2-6 2.200-6-2.200z" fill="none" stroke="#555" stroke-width=".9"/><path d="M12 1L23 5v6.500L12 16 1.500 11.500V5z" fill="url(#gY)" stroke="#3a3000" stroke-width="1"/><path d="M1.500 5L12 9.500 23 5M12 9.500V16" fill="none" stroke="#3a3000" stroke-width=".9"/><path d="M12 9.500V16L23 11.500V5z" fill="#c8a800" opacity=".55"/></svg>
<svg class="a" style="left:44px;top:124px" width="26" height="26" viewBox="-1.0 -1.0 26.0 26.0"><path d="M1 19.700L22.800 3.700" stroke="#e01010" stroke-width="2.200"/><path d="M1.500 7.600C5 4 9 2.500 13.100 2.300L21.900 5.700C23.500 8 23.500 11 22.800 13.400 20.500 17 17 20 13.100 21.600L7.300 18.300C8.500 16 6.500 13 3.400 12.400z" fill="url(#gY)" stroke="#3a3000" stroke-width="1" stroke-linejoin="round"/><path d="M3.400 12.400C7 9 11 7.500 15 7.800M7.300 18.300C11 15 14 12 15 7.800M15 7.800L21.900 5.700" fill="none" stroke="#3a3000" stroke-width=".7" opacity=".8"/><path d="M13.100 21.600C17 20 20.500 17 22.800 13.400 23.500 11 23.500 8 21.900 5.700L15 7.800C15.500 12 13 17 7.300 18.300z" fill="#b89400" opacity=".35"/></svg>
<svg class="a" style="left:75px;top:124px" width="26" height="26" viewBox="-1.0 -1.0 26.0 26.0"><path d="M3.500 10.500L9 3.500l13 2.500v16.500L9.500 19z" fill="url(#gY)" stroke="#3a3000" stroke-width=".9"/><path d="M9.500 11.500L22 6" stroke="#3a3000" stroke-width=".8" fill="none"/><path d="M9 3.500l13 2.500v16.500" fill="none" stroke="#e01818" stroke-width="2.200"/><path d="M3.500 10.500l6 1v7.500l-6-1z" fill="none" stroke="#e01818" stroke-width="2.200" stroke-linejoin="round"/><path d="M5.300 12.500l2.500.5v3.800l-2.500-.5z" fill="#e01818" opacity=".55"/></svg>
<svg class="a" style="left:106.5px;top:124px" width="26" height="26" viewBox="-1.0 -1.0 26.0 26.0"><path d="M2.500 13.500L8 12C10 8 10 5 9.500 2.500l9 2 4.500 14-7 1c-2 1.500-5 3-7.500 4.500z" fill="url(#gY)" stroke="#3a3000" stroke-width=".9"/><path d="M9.500 2.500l9 2 4.500 14" fill="none" stroke="#e01818" stroke-width="2.200" stroke-linejoin="round"/><path d="M2.500 13.500l6 1.300v8.500l-6-1.500z" fill="none" stroke="#e01818" stroke-width="2.200" stroke-linejoin="round"/><rect x="3.800" y="17" width="3.200" height="3" fill="#e01818" stroke="#3a3000" stroke-width=".6"/><path d="M11 16.500l3-1.500M15 12l2.500-2" stroke="#e01818" stroke-width="1.800" opacity=".7"/><ellipse cx="22" cy="2.500" rx="1.200" ry="1.800" fill="none" stroke="#e01818" stroke-width="1.200" transform="rotate(20 22 2.500)"/></svg>
<svg class="a" style="left:137px;top:124px" width="26" height="26" viewBox="-1.0 -1.0 26.0 26.0"><path d="M2.500 5.500L12 2l10 2.500V17.500L12 22 2.500 19z" fill="#fbea3c" stroke="#3a3000" stroke-width="1"/><path d="M12 7.500L22 4.500V17.500L12 22z" fill="#c8a800" opacity=".5"/><path d="M2.500 5.500L12 7.500l10-3" fill="none" stroke="#3a3000" stroke-width=".8"/><path d="M12 7.500V22M2.500 19.500L12 22l10-4" fill="none" stroke="#e41818" stroke-width="1.800"/><path d="M12 7.500V22M2.500 19.500L12 22l10-4" fill="none" stroke="#7a0000" stroke-width=".5" opacity=".5"/><circle cx="12" cy="7" r="2.300" fill="#e41818" stroke="#7a0000" stroke-width=".6"/><circle cx="12" cy="22" r="2.300" fill="#e41818" stroke="#7a0000" stroke-width=".6"/><circle cx="2.800" cy="19.500" r="2.300" fill="#e41818" stroke="#7a0000" stroke-width=".6"/><circle cx="21.500" cy="18" r="2.300" fill="#e41818" stroke="#7a0000" stroke-width=".6"/></svg>
<svg class="a" style="left:186px;top:124px" width="26" height="26" viewBox="-1.0 -1.0 26.0 26.0"><path d="M1.500 11L13.500 3.500 23 7v7L11 22.500 1.500 18z" fill="url(#gB)" stroke="#0b2c55" stroke-width="1"/><path d="M1.500 11L11 15l12-8M11 15v7.500" fill="none" stroke="#0b2c55" stroke-width=".9"/><path d="M11 15v7.500L23 14V7z" fill="#1d4786" opacity=".45"/><path d="M7.500 10.500L14 6.500l5 1.700-6.500 4.300z" fill="#e41818" stroke="#6a0000" stroke-width=".8"/><path d="M10.500 9.500l3.500-1.800 2 2.800z" fill="#900" opacity=".6"/></svg>
<svg class="a" style="left:217px;top:124px" width="26" height="26" viewBox="-1.0 -1.0 26.0 26.0"><path d="M1.500 1.500L17 4l6 2.500v16L17 23.500 1.500 20z" fill="url(#gB)" stroke="#0b2c55" stroke-width="1"/><path d="M17 4v19.500" stroke="#0b2c55" stroke-width=".9"/><path d="M17 4l6 2.500v16l-6 1z" fill="#1d4786" opacity=".5"/><ellipse cx="9" cy="12" rx="5.500" ry="7.500" fill="url(#gR)" stroke="#5a0000" stroke-width=".9"/><ellipse cx="12" cy="12.500" rx="1.800" ry="4.800" fill="#f8f8f8"/></svg>
<svg class="a" style="left:248px;top:124px" width="26" height="26" viewBox="-1.0 -1.0 26.0 26.0"><path d="M1 21L23 3.500" stroke="#e01010" stroke-width="2.200"/><path d="M9.500 3.500C12 1.500 16 1.500 18.500 3c3 2.500 4.500 7 3.500 11.500l-3 2.500C19.500 12 17 7.500 12.500 6z" fill="url(#gR)" stroke="#5a0000" stroke-width=".9"/><path d="M13.500 2.300c3.500 2 6 7 5.500 13" fill="none" stroke="#5a0000" stroke-width=".8"/><path d="M1.500 8.500C5 5.500 10 5.500 13.500 8c3.500 3 4.500 7 3.500 12l-4 2.500-5-2.500c1-3-.5-6.500-4.500-7.500z" fill="url(#gB)" stroke="#0b2c55" stroke-width="1" stroke-linejoin="round"/><path d="M2.500 10.500c4.500-2 9.500 1 10.500 12M5 7c5-.5 10 4 10 12.500" fill="none" stroke="#0b2c55" stroke-width=".8"/></svg>
<svg class="a" style="left:279px;top:124px" width="26" height="26" viewBox="-1.0 -1.0 26.0 26.0"><path d="M3.500 10.500L9 3.500l13 2.500v16.500L9.500 19z" fill="url(#gR)" stroke="#5a0000" stroke-width=".9"/><path d="M9.500 11.500L22 6" stroke="#5a0000" stroke-width=".8" fill="none"/><path d="M9 3.500l13 2.500v16.500" fill="none" stroke="#4a86c8" stroke-width="2.200"/><path d="M3.500 10.500l6 1v7.500l-6-1z" fill="none" stroke="#4a86c8" stroke-width="2.200" stroke-linejoin="round"/><path d="M5.300 12.500l2.500.5v3.800l-2.500-.5z" fill="#4a86c8" opacity=".55"/></svg>
<svg class="a" style="left:310.5px;top:124px" width="26" height="26" viewBox="-1.0 -1.0 26.0 26.0"><path d="M2.500 13.500L8 12C10 8 10 5 9.500 2.500l9 2 4.500 14-7 1c-2 1.500-5 3-7.500 4.500z" fill="url(#gR)" stroke="#5a0000" stroke-width=".9"/><path d="M9.500 2.500l9 2 4.500 14" fill="none" stroke="#4a86c8" stroke-width="2.200" stroke-linejoin="round"/><path d="M2.500 13.500l6 1.300v8.500l-6-1.500z" fill="none" stroke="#4a86c8" stroke-width="2.200" stroke-linejoin="round"/><rect x="3.800" y="17" width="3.200" height="3" fill="#4a86c8" stroke="#5a0000" stroke-width=".6"/><path d="M11 16.500l3-1.500M15 12l2.500-2" stroke="#4a86c8" stroke-width="1.800" opacity=".7"/><ellipse cx="22" cy="2.500" rx="1.200" ry="1.800" fill="none" stroke="#4a86c8" stroke-width="1.200" transform="rotate(20 22 2.500)"/></svg>
<svg class="a" style="left:341px;top:124px" width="26" height="26" viewBox="-1.0 -1.0 26.0 26.0"><path d="M2.500 5.500L12 2l10 2.500V17.500L12 22 2.500 19z" fill="#ee2424" stroke="#5a0000" stroke-width="1"/><path d="M12 7.500L22 4.500V17.500L12 22z" fill="#a80000" opacity=".5"/><path d="M2.500 5.500L12 7.500l10-3" fill="none" stroke="#5a0000" stroke-width=".8"/><path d="M12 7.500V22M2.500 19.500L12 22l10-4" fill="none" stroke="#4a86c8" stroke-width="1.800"/><path d="M12 7.500V22M2.500 19.500L12 22l10-4" fill="none" stroke="#0b2c55" stroke-width=".5" opacity=".5"/><circle cx="12" cy="7" r="2.300" fill="#4a86c8" stroke="#0b2c55" stroke-width=".6"/><circle cx="12" cy="22" r="2.300" fill="#4a86c8" stroke="#0b2c55" stroke-width=".6"/><circle cx="2.800" cy="19.500" r="2.300" fill="#4a86c8" stroke="#0b2c55" stroke-width=".6"/><circle cx="21.500" cy="18" r="2.300" fill="#4a86c8" stroke="#0b2c55" stroke-width=".6"/></svg>
<svg class="a" style="left:390px;top:124px" width="26" height="26" viewBox="-1.0 -1.0 26.0 26.0"><path d="M1.500 13L17 2.500l6 2V23.500H1.500z" fill="url(#gB)" stroke="#0b2c55" stroke-width="1"/><path d="M1.500 18.500L13 23.500M1.500 13l21.500 6" fill="none" stroke="#0b2c55" stroke-width=".8" opacity=".8"/><path d="M4.500 4L7.500 1l5 3.500V13l-4 3-4-3z" fill="url(#gBd)" stroke="#0b2c55" stroke-width=".9"/><path d="M2.500 21.500l3-2M9 17.500l2.500-1.700M21 9.500l2-1.300" stroke="#e41818" stroke-width="2"/><path d="M12.500 11.500c0-1.500 3-4 5.500-4.500 2.500.5 5.500 3 5.500 4.500v7c0 1.500-2.500 3-5.500 3s-5.500-1.500-5.500-3z" fill="url(#gY)" stroke="#3a3000" stroke-width=".9"/><path d="M12.500 11.500c0 1.500 2.500 3 5.500 3s5.500-1.500 5.500-3" fill="none" stroke="#3a3000" stroke-width=".7"/></svg>
<svg class="a" style="left:421px;top:124px" width="26" height="26" viewBox="-1.0 -1.0 26.0 26.0"><path d="M1.500 13L17 2.500l6 2V23.500H1.500z" fill="url(#gB)" stroke="#0b2c55" stroke-width="1"/><path d="M1.500 18.500L13 23.500M1.500 13l21.500 6" fill="none" stroke="#0b2c55" stroke-width=".8" opacity=".8"/><path d="M1.5 11.620000000000001l3.0 -1.62l3.0 1.62v3.0l-3.0 1.62l-3.0 -1.62z" fill="url(#gBd)" stroke="#0b2c55" stroke-width=".8" stroke-linejoin="round"/><path d="M1.5 11.620000000000001l3.0 1.62l3.0 -1.62M4.5 13.24v3.0" fill="none" stroke="#0b2c55" stroke-width=".6"/><path d="M9 11.39l3.5 -1.8900000000000001l3.5 1.8900000000000001v3.5l-3.5 1.8900000000000001l-3.5 -1.8900000000000001z" fill="url(#gY)" stroke="#3a3000" stroke-width=".8" stroke-linejoin="round"/><path d="M9 11.39l3.5 1.8900000000000001l3.5 -1.8900000000000001M12.5 13.280000000000001v3.5" fill="none" stroke="#3a3000" stroke-width=".6"/><path d="M16.5 11.39l3.5 -1.8900000000000001l3.5 1.8900000000000001v3.5l-3.5 1.8900000000000001l-3.5 -1.8900000000000001z" fill="url(#gY)" stroke="#3a3000" stroke-width=".8" stroke-linejoin="round"/><path d="M16.5 11.39l3.5 1.8900000000000001l3.5 -1.8900000000000001M20.0 13.280000000000001v3.5" fill="none" stroke="#3a3000" stroke-width=".6"/></svg>
<svg class="a" style="left:452px;top:124px" width="26" height="26" viewBox="-1.0 -1.0 26.0 26.0"><path d="M1.500 13L17 2.500l6 2V23.500H1.500z" fill="url(#gB)" stroke="#0b2c55" stroke-width="1"/><path d="M1.500 18.500L13 23.500M1.500 13l21.500 6" fill="none" stroke="#0b2c55" stroke-width=".8" opacity=".8"/><path d="M9.5 4.755l3.25 -1.7550000000000001l3.25 1.7550000000000001v3.25l-3.25 1.7550000000000001l-3.25 -1.7550000000000001z" fill="url(#gY)" stroke="#3a3000" stroke-width=".8" stroke-linejoin="round"/><path d="M9.5 4.755l3.25 1.7550000000000001l3.25 -1.7550000000000001M12.75 6.51v3.25" fill="none" stroke="#3a3000" stroke-width=".6"/><path d="M16 7.255l3.25 -1.7550000000000001l3.25 1.7550000000000001v3.25l-3.25 1.7550000000000001l-3.25 -1.7550000000000001z" fill="url(#gY)" stroke="#3a3000" stroke-width=".8" stroke-linejoin="round"/><path d="M16 7.255l3.25 1.7550000000000001l3.25 -1.7550000000000001M19.25 9.01v3.25" fill="none" stroke="#3a3000" stroke-width=".6"/><path d="M16.5 12.755l3.25 -1.7550000000000001l3.25 1.7550000000000001v3.25l-3.25 1.7550000000000001l-3.25 -1.7550000000000001z" fill="url(#gY)" stroke="#3a3000" stroke-width=".8" stroke-linejoin="round"/><path d="M16.5 12.755l3.25 1.7550000000000001l3.25 -1.7550000000000001M19.75 14.51v3.25" fill="none" stroke="#3a3000" stroke-width=".6"/><path d="M10 15.89l3.5 -1.8900000000000001l3.5 1.8900000000000001v3.5l-3.5 1.8900000000000001l-3.5 -1.8900000000000001z" fill="url(#gY)" stroke="#3a3000" stroke-width=".8" stroke-linejoin="round"/><path d="M10 15.89l3.5 1.8900000000000001l3.5 -1.8900000000000001M13.5 17.78v3.5" fill="none" stroke="#3a3000" stroke-width=".6"/><path d="M3.5 9.755l3.25 -1.7550000000000001l3.25 1.7550000000000001v3.25l-3.25 1.7550000000000001l-3.25 -1.7550000000000001z" fill="url(#gY)" stroke="#3a3000" stroke-width=".8" stroke-linejoin="round"/><path d="M3.5 9.755l3.25 1.7550000000000001l3.25 -1.7550000000000001M6.75 11.51v3.25" fill="none" stroke="#3a3000" stroke-width=".6"/><path d="M4 15.120000000000001l3.0 -1.62l3.0 1.62v3.0l-3.0 1.62l-3.0 -1.62z" fill="url(#gBd)" stroke="#0b2c55" stroke-width=".8" stroke-linejoin="round"/><path d="M4 15.120000000000001l3.0 1.62l3.0 -1.62M7.0 16.740000000000002v3.0" fill="none" stroke="#0b2c55" stroke-width=".6"/></svg>
<svg class="a" style="left:483px;top:124px" width="26" height="26" viewBox="-1.0 -1.0 26.0 26.0"><path d="M1.500 13L17 2.500l6 2V23.500H1.500z" fill="url(#gB)" stroke="#0b2c55" stroke-width="1"/><path d="M1.500 18.500L13 23.500M1.500 13l21.500 6" fill="none" stroke="#0b2c55" stroke-width=".8" opacity=".8"/><path d="M2.5 4.255l3.25 -1.7550000000000001l3.25 1.7550000000000001v3.25l-3.25 1.7550000000000001l-3.25 -1.7550000000000001z" fill="url(#gY)" stroke="#3a3000" stroke-width=".8" stroke-linejoin="round"/><path d="M2.5 4.255l3.25 1.7550000000000001l3.25 -1.7550000000000001M5.75 6.01v3.25" fill="none" stroke="#3a3000" stroke-width=".6"/><path d="M8.5 4.6450000000000005l6.75 -3.6450000000000005l6.75 3.6450000000000005v6.75l-6.75 3.6450000000000005l-6.75 -3.6450000000000005z" fill="url(#gY)" stroke="#3a3000" stroke-width=".8" stroke-linejoin="round"/><path d="M8.5 4.6450000000000005l6.75 3.6450000000000005l6.75 -3.6450000000000005M15.25 8.290000000000001v6.75" fill="none" stroke="#3a3000" stroke-width=".6"/><path d="M14 14.565000000000001l4.75 -2.5650000000000004l4.75 2.5650000000000004v4.75l-4.75 2.5650000000000004l-4.75 -2.5650000000000004z" fill="url(#gY)" stroke="#3a3000" stroke-width=".8" stroke-linejoin="round"/><path d="M14 14.565000000000001l4.75 2.5650000000000004l4.75 -2.5650000000000004M18.75 17.130000000000003v4.75" fill="none" stroke="#3a3000" stroke-width=".6"/><path d="M5.5 16.755l3.25 -1.7550000000000001l3.25 1.7550000000000001v3.25l-3.25 1.7550000000000001l-3.25 -1.7550000000000001z" fill="url(#gBd)" stroke="#0b2c55" stroke-width=".8" stroke-linejoin="round"/><path d="M5.5 16.755l3.25 1.7550000000000001l3.25 -1.7550000000000001M8.75 18.51v3.25" fill="none" stroke="#0b2c55" stroke-width=".6"/></svg>
<svg class="a" style="left:520px;top:124px" width="26" height="26" viewBox="-1.0 -1.0 26.0 26.0"><path d="M1.500 13C1.500 6 5 2.500 11 1.500L23 6V14.500L11 23 1.500 19z" fill="url(#gB)" stroke="#0b2c55" stroke-width="1"/><path d="M11 13.500V23L23 14.500V6C17 7 13 10 11 13.500z" fill="#1d4786" opacity=".45"/><path d="M1.500 13C1.500 6 5 2.500 11 1.500L20.500 5C15 6.500 11.500 10 11 16z" fill="url(#gR)" stroke="#5a0000" stroke-width=".8"/><path d="M1.500 13L11 16M20.500 5L23 6" fill="none" stroke="#0b2c55" stroke-width=".8"/></svg>
<svg class="a" style="left:551px;top:124px" width="26" height="26" viewBox="-1.0 -1.0 26.0 26.0"><path d="M1.500 13L10.500 1.500 23 6V14.500L11 23 1.500 19z" fill="url(#gB)" stroke="#0b2c55" stroke-width="1"/><path d="M11 16.500V23L23 14.500V6z" fill="#1d4786" opacity=".45"/><path d="M1.500 13L10.500 1.500 20.500 5 11 16.500z" fill="url(#gR)" stroke="#5a0000" stroke-width=".8"/><path d="M20.500 5L23 6M11 16.500V23" fill="none" stroke="#0b2c55" stroke-width=".8"/></svg>
<svg class="a" style="left:582px;top:124px" width="26" height="26" viewBox="-1.0 -1.0 26.0 26.0"><path d="M12 .8L22.500 5V18L12 23.300 1.500 18V5z" fill="url(#gB)" stroke="#0b2c55" stroke-width="1"/><path d="M4.500 8L12 11l-1 9.500-5.500-2.800z" fill="url(#gR)" stroke="#5a0000" stroke-width=".7"/><path d="M13.500 11l6.500-3-1 9.800-4.700 2.700z" fill="url(#gR)" stroke="#5a0000" stroke-width=".7"/><path d="M12 4l5.500 2.200L12 8.500 6.500 6.200z" fill="url(#gR)" stroke="#5a0000" stroke-width=".7"/><path d="M1.500 5L12 9.500 22.500 5M12 9.500V23.300" fill="none" stroke="#0b2c55" stroke-width=".8"/><path d="M8 21.500l3.500-2 3.500 2" fill="none" stroke="#f0f0f0" stroke-width="1.200"/></svg>
<svg class="a" style="left:613px;top:124px" width="26" height="26" viewBox="-1.0 -1.0 26.0 26.0"><path d="M3.500 3.500L12 .8l10.500 3.500v14L12 23.300 1.500 19.500z" fill="url(#gB)" stroke="#0b2c55" stroke-width="1"/><path d="M7 5.500l5-1.500 8 2.500v9.500L12 19.500 5.500 17z" fill="url(#gR)" stroke="#5a0000" stroke-width=".8"/><path d="M12 4v9.500l8 2.500M12 13.500L5.500 17" fill="none" stroke="#5a0000" stroke-width=".9"/><path d="M12 4v9.500L5.500 17 7 5.500z" fill="#c00000" opacity=".5"/></svg>
<svg class="a" style="left:650px;top:124px" width="26" height="26" viewBox="-1.0 -1.0 26.0 26.0"><circle cx="16" cy="8" r="7" fill="url(#gSph)" stroke="#0b2c55" stroke-width=".8"/><circle cx="8.500" cy="15" r="7.300" fill="url(#gSph)" stroke="#0b2c55" stroke-width=".8"/></svg>
<svg class="a" style="left:693px;top:124px" width="26" height="26" viewBox="-1.0 -1.0 26.0 26.0"><path d="M3.200 7.400L10.700 1.800 15.700 3.800 8.400 9.100z" fill="url(#gB)"/><path d="M8.400 9.100L15.700 3.800V9.100L8.400 15z" fill="url(#gBd)"/><path d="M8.400 15L15.700 9.100 20.600 10.400 13.700 17z" fill="url(#gB)"/><path d="M3.200 7.400L8.400 9.100V15L13.700 17V22.200L3.200 18.300z" fill="url(#gB)"/><path d="M13.700 17L20.600 10.400V16.300L13.700 22.200z" fill="url(#gBd)"/><path d="M3.200 7.400L10.700 1.800 15.700 3.800V9.100L20.600 10.400V16.300L13.700 22.200 3.200 18.300zM3.200 7.400L8.400 9.100 15.700 3.800M8.400 9.100V15L13.700 17 20.600 10.400M8.400 15L15.700 9.100M13.700 17V22.200" fill="none" stroke="#0b2c55" stroke-width="1" stroke-linejoin="round"/></svg>
<svg class="a" style="left:724px;top:124px" width="26" height="26" viewBox="-1.0 -1.0 26.0 26.0"><path d="M2.500 1.500h20v17l-4 4.500h-16z" fill="url(#gG)" stroke="#707070" stroke-width="1"/><path d="M22.500 18.500l-4 4.500v-4.500z" fill="#c8c8c8" stroke="#808080" stroke-width=".6"/><rect x="5" y="10.500" width="10" height="10" fill="none" stroke="#e01010" stroke-width="1.600"/><circle cx="16" cy="9" r="5.200" fill="none" stroke="#e01010" stroke-width="1.600"/></svg>
<svg class="a" style="left:755px;top:124px" width="26" height="26" viewBox="-1.0 -1.0 26.0 26.0"><path d="M9 1h6v8h4.500L12 16 4.500 9H9z" fill="#b0b0b0" stroke="#9a9a9a" stroke-width=".8"/><path d="M1.500 13h5v7h11v-7h5v10h-21z" fill="#f4f4f4" stroke="#b8b8b8" stroke-width="1"/></svg>
<svg class="a" style="left:786.5px;top:124px" width="26" height="26" viewBox="-1.0 -1.0 26.0 26.0"><path d="M8 3.500L15 .8l8 3.500v15L16 23 8 20z" fill="url(#gB)" stroke="#0b2c55" stroke-width="1"/><path d="M16 7.500V23l7-3.700V4.300z" fill="#1d4786" opacity=".55"/><path d="M8 3.500l8 4 7-3.200" fill="none" stroke="#0b2c55" stroke-width=".8"/><path d="M1.500 3.500l11 4.500v15l-11-5z" fill="#f2f2f2" stroke="#8a8a8a" stroke-width=".8"/><rect x="3.500" y="11" width="5" height="6" fill="none" stroke="#e01010" stroke-width="1.100" transform="skewY(22) translate(0 -2.500)"/><circle cx="8" cy="11.500" r="3" fill="none" stroke="#e01010" stroke-width="1.100"/></svg>
<svg class="a" style="left:823px;top:124px" width="26" height="26" viewBox="-1.0 -1.0 26.0 26.0"><circle cx="12" cy="12" r="3.100" fill="#e41818" stroke="#3a6ab0" stroke-width="1.500"/></svg>
<svg class="a" style="left:854px;top:124px" width="26" height="26" viewBox="-1.0 -1.0 26.0 26.0"><path d="M3 21L21 3" stroke="#0b2c55" stroke-width="3.400"/><path d="M3 21L21 3" stroke="#5a90d0" stroke-width="1.800"/><circle cx="3.500" cy="20.500" r="2.300" fill="#e41818" stroke="#7a0000" stroke-width=".6"/><circle cx="20.500" cy="3.500" r="2.300" fill="#e41818" stroke="#7a0000" stroke-width=".6"/></svg>
<svg class="a" style="left:885px;top:124px" width="26" height="26" viewBox="-1.0 -1.0 26.0 26.0"><path d="M14.500 3l7.500 7.500L11.500 21 3.500 13.500z" fill="none" stroke="#0b2c55" stroke-width="3.600" stroke-linejoin="round"/><path d="M14.500 3l7.500 7.500L11.500 21 3.500 13.500z" fill="none" stroke="#5a90d0" stroke-width="1.900" stroke-linejoin="round"/><circle cx="14.5" cy="3" r="2.300" fill="#e41818" stroke="#7a0000" stroke-width=".6"/><circle cx="22" cy="10.5" r="2.300" fill="#e41818" stroke="#7a0000" stroke-width=".6"/><circle cx="11.5" cy="21" r="2.300" fill="#e41818" stroke="#7a0000" stroke-width=".6"/><circle cx="3.5" cy="13.5" r="2.300" fill="#e41818" stroke="#7a0000" stroke-width=".6"/></svg>
<svg class="a" style="left:916px;top:124px" width="26" height="26" viewBox="-1.0 -1.0 26.0 26.0"><path d="M2 3.500C5 1.500 9 5 12 3c3-2 7-2.500 9.500-1.500 1.500 3 .5 6-2 8.500-2 2-2 6-1 9.500.5 2-2.500 3.500-5 2.500-3-1.500-7-1.500-10.500-3C2 14.500 1 8 2 3.500z" fill="url(#gSph)" stroke="#0b2c55" stroke-width=".9"/><circle cx="20.5" cy="3" r="2.200" fill="#e41818" stroke="#7a0000" stroke-width=".6"/><circle cx="2.5" cy="10.5" r="2.200" fill="#e41818" stroke="#7a0000" stroke-width=".6"/><circle cx="17.5" cy="21" r="2.200" fill="#e41818" stroke="#7a0000" stroke-width=".6"/></svg>
<svg class="a" style="left:947.5px;top:124px" width="26" height="26" viewBox="-1.0 -1.0 26.0 26.0"><path d="M5.500 6C3 7 .8 11 1.500 14.500c2 .5 3.500-1 4.500-3M18.500 6c2.500 1 4.700 5 4 8.500-2 .5-3.500-1-4.500-3" fill="#f08a2a" stroke="#5a2a00" stroke-width=".8"/><path d="M12 1C7.500.500 4.500 3.500 5 8c.3 3 1 6 2 9 .8 2.500 2.500 5.500 5 5.500s4.200-3 5-5.500c1-3 1.700-6 2-9C19.500 3.500 16.500.500 12 1z" fill="url(#gOr)" stroke="#5a2a00" stroke-width=".9"/><ellipse cx="12.500" cy="11" rx="4" ry="2.300" fill="#fff"/><ellipse cx="13.500" cy="11" rx="2" ry="1.300" fill="#111"/><path d="M10.500 19.500h3M12 19.500v1.500" stroke="#3a1a00" stroke-width="1" fill="none"/></svg>
<svg class="a" style="left:168px;top:135px" width="8" height="5" viewBox="0 0 8 5"><path d="M0 0h7.500L3.750 4.300z" fill="#1a1a1a"/></svg>
<svg class="a" style="left:372px;top:135px" width="8" height="5" viewBox="0 0 8 5"><path d="M0 0h7.500L3.750 4.300z" fill="#1a1a1a"/></svg>
<div class="a" style="left:180px;top:125px;width:1px;height:24px;background:#c5c5c5;"></div>
<div class="a" style="left:384px;top:125px;width:1px;height:24px;background:#c5c5c5;"></div>
<div class="a" style="left:514px;top:125px;width:1px;height:24px;background:#c5c5c5;"></div>
<div class="a" style="left:644px;top:125px;width:1px;height:24px;background:#c5c5c5;"></div>
<div class="a" style="left:817px;top:125px;width:1px;height:24px;background:#c5c5c5;"></div>
<svg class="a" style="left:273px;top:154px" width="1107" height="575" viewBox="273 154 1107 575"><defs><linearGradient id="bg" x1="0" y1="0" x2="0" y2="1"><stop offset="0" stop-color="#333365"/><stop offset="1" stop-color="#9697ad"/></linearGradient></defs><rect x="273" y="154" width="1107" height="575" fill="url(#bg)"/><polygon points="477.2,407.4 509.8,388.6 533.2,402.1 808.1,243.5 808.1,216.5 840.7,197.7 1199.0,404.6 1199.0,473.6 835.5,683.3 477.2,476.4" fill="#808080" stroke="#0a0a0a" stroke-width="1.7" stroke-linejoin="round"/><path d="M477.2,407.4L835.5,614.3M509.8,388.6L868.1,595.5M868.1,595.5L835.5,614.3M835.5,614.3L835.5,683.3M868.1,595.5L868.1,622.5M868.1,622.5L1166.4,450.4M1166.4,450.4L1166.4,423.4M1166.4,423.4L808.1,216.5M1166.4,423.4L1199.0,404.6M808.1,243.5L1166.4,450.4" fill="none" stroke="#0a0a0a" stroke-width="1.7" stroke-linecap="round"/><text transform="matrix(0.866 -0.5 0 1 563 269.7)" font-family="Liberation Serif,serif" font-style="italic" font-size="38" fill="#176bb6" fill-opacity=".82">YZ_Plane</text><text transform="matrix(0.866 0.5 -0.866 0.5 576 241)" font-family="Liberation Serif,serif" font-style="italic" font-size="37" fill="#176bb6" fill-opacity=".82">X_Axis</text><text transform="matrix(0.866 -0.5 0 1 560 568)" font-family="Liberation Serif,serif" font-style="italic" font-size="40" fill="#176bb6" fill-opacity=".82">Y_Axis</text><text transform="matrix(0 -1 -0.876 -0.505 862.8 752)" font-family="Liberation Serif,serif" font-style="italic" font-size="37" fill="#000">Z_Axis</text><text transform="translate(829.5 89.5) rotate(30)" font-family="Liberation Serif,serif" font-style="italic" font-size="39" fill="#1c61a8" stroke="#1c61a8" stroke-width=".7">XY_Plane</text><path d="M273.0,404.5L707.4,154.0M998.2,154.0L1380.0,374.0M273.0,423.8L801.0,728.0M905.4,728.0L1380.0,454.6M555.0,242.0L1151.0,586.0M555.0,586.0L1151.0,242.0M554.7,154.0L554.7,728.0M1150.8,154.0L1150.8,728.0M852.8,154.0L852.8,414.0M852.8,672.5L852.8,728.0" fill="none" stroke="#3399ff" stroke-width="2"/><path d="M852.8,417V664" fill="none" stroke="#3399ff" stroke-width="2" stroke-dasharray="4 12"/><text x="483.8" y="314.9" font-family="Liberation Serif,serif" font-size="16.8" fill="#fff" stroke="#fff" stroke-width=".4" textLength="64.4">0.40 mm</text><path d="M477.2,331.5V318.6L488,312.3L488.700,313V324.500" fill="none" stroke="#fff" stroke-width="2" stroke-linejoin="round"/><path d="M473,327l9,9M482,327l-9,9M484,320.100l9,9M493,320.100l-9,9" fill="none" stroke="#fff" stroke-width="1"/><path d="M1351.6,699V682" stroke="#1a1a99" stroke-width="1.6"/><path d="M1351.6,680l-1.8,5h3.6z" fill="#1a1a99"/><path d="M1351.6,699L1361,693.6" stroke="#1a8a1a" stroke-width="1.6"/><path d="M1363.5,692.2l-5.2,.8 1.8,3.1z" fill="#1a8a1a"/><path d="M1351.6,699L1366,707.8" stroke="#8a1a1a" stroke-width="1.6"/><path d="M1368.3,709.2l-3.4,-4.2 -1.9,3.1z" fill="#8a1a1a"/><text x="1353.3" y="680.6" font-family="Liberation Sans,sans-serif" font-size="9" fill="#000">Z</text><text x="1365.6" y="692.6" font-family="Liberation Sans,sans-serif" font-size="9" fill="#000">Y</text><text x="1370.6" y="709.6" font-family="Liberation Sans,sans-serif" font-size="9" fill="#000">X</text><path d="M1296.8,162.2L1288,170.7H1305.7zM1296.8,311.8L1288,303H1305.7zM1222.2,236.8L1231,228V245.7zM1372.2,236.8L1363.3,228V245.7z" fill="#dfe3ec"/><path d="M1276,170.8 Q1257,177.5 1247.8,189.2" fill="none" stroke="#dfe3ec" stroke-width="4.2"/><path d="M1242.6,194.6L1243.3,183.8L1252.8,191.6z" fill="#dfe3ec"/><path d="M1317.6,170.8 Q1336.6,177.5 1345.8,189.2" fill="none" stroke="#dfe3ec" stroke-width="4.2"/><path d="M1351,194.6L1350.3,183.8L1340.8,191.6z" fill="#dfe3ec"/><defs><filter id="blur1"><feGaussianBlur stdDeviation="0.7"/></filter><clipPath id="cubeclip"><path d="M1296.8,195.4 Q1300,194.5 1304,196.5 L1336,213 Q1340.3,215.5 1340.3,220 L1338,259 Q1337.5,264 1333,266.5 L1302,282.5 Q1296.8,285 1291.5,282.3 L1262,263 Q1258.4,260.5 1257.5,256 L1253.4,222 Q1253,216 1258,213.5 L1290,196.5 Q1293.5,194.8 1296.8,195.4z"/></clipPath></defs><path d="M1296.8,195.4 Q1300,194.5 1304,196.5 L1336,213 Q1340.3,215.5 1340.3,220 L1338,259 Q1337.5,264 1333,266.5 L1302,282.5 Q1296.8,285 1291.5,282.3 L1262,263 Q1258.4,260.5 1257.5,256 L1253.4,222 Q1253,216 1258,213.5 L1290,196.5 Q1293.5,194.8 1296.8,195.4z" fill="#f4f6fa" filter="url(#blur1)"/><g clip-path="url(#cubeclip)"><path d="M1296.8,236.8L1254,212M1296.8,236.8L1340,212M1296.8,236.8V288" stroke="#e4e8f1" stroke-width="14" fill="none" opacity=".85" filter="url(#blur1)"/></g><circle cx="1296.8" cy="236.8" r="10.5" fill="#e9ecf3"/><circle cx="1296.8" cy="236.8" r="5.500" fill="#f5f7fa"/><path d="M1296.8,236.8V213M1296.8,236.8L1326,255M1296.8,236.8L1268,254" stroke="#c4c4d2" stroke-width="1.100" fill="none"/><path d="M1268,254L1292,240" stroke="#b0eca8" stroke-width="1" fill="none"/><text transform="matrix(0.82 0.44 -0.36 0.6 1289 206.5)" font-family="Liberation Sans,sans-serif" font-size="13.5" fill="#3c3c3c" stroke="#3c3c3c" stroke-width=".25" opacity=".85">Top</text><text transform="matrix(0.74 0.56 0 1.08 1260.5 246)" font-family="Liberation Sans,sans-serif" font-size="12.5" fill="#3a3a3a" stroke="#3a3a3a" stroke-width=".25" opacity=".88" letter-spacing=".9">Front</text><text transform="matrix(0.8 -0.5 0 1.08 1308 265.5)" font-family="Liberation Sans,sans-serif" font-size="12.5" fill="#3a3a3a" stroke="#3a3a3a" stroke-width=".25" opacity=".88" letter-spacing=".5">Right</text><path d="M1258.4,258.1L1248.9,209.5" stroke="#1414e6" stroke-width="1.3"/><path d="M1258.4,258.1L1296.3,291.6" stroke="#e61428" stroke-width="1.4"/><text x="1245.8" y="206.8" font-family="Liberation Sans,sans-serif" font-size="9.5" fill="#1414e6">Z</text><text x="1299.3" y="300" font-family="Liberation Sans,sans-serif" font-size="9.5" fill="#dc1428">X</text><path d="M1334.7,284l10.5,3.5V302l-10.5,4 -10.5,-4V287.5z" fill="#e4e4e4"/><path d="M1334.7,291V306L1324.2,302V287.5z" fill="#d2d2d2"/><path d="M1334.7,284l10.5,3.5 -10.5,3.5 -10.5,-3.5z" fill="#f0f0f0"/><path d="M1350.5,291h13l-6.5,7z" fill="#3a3a3a"/><rect x="273" y="728" width="1107" height="1" fill="#a0a0a2"/></svg>
</body></html>
